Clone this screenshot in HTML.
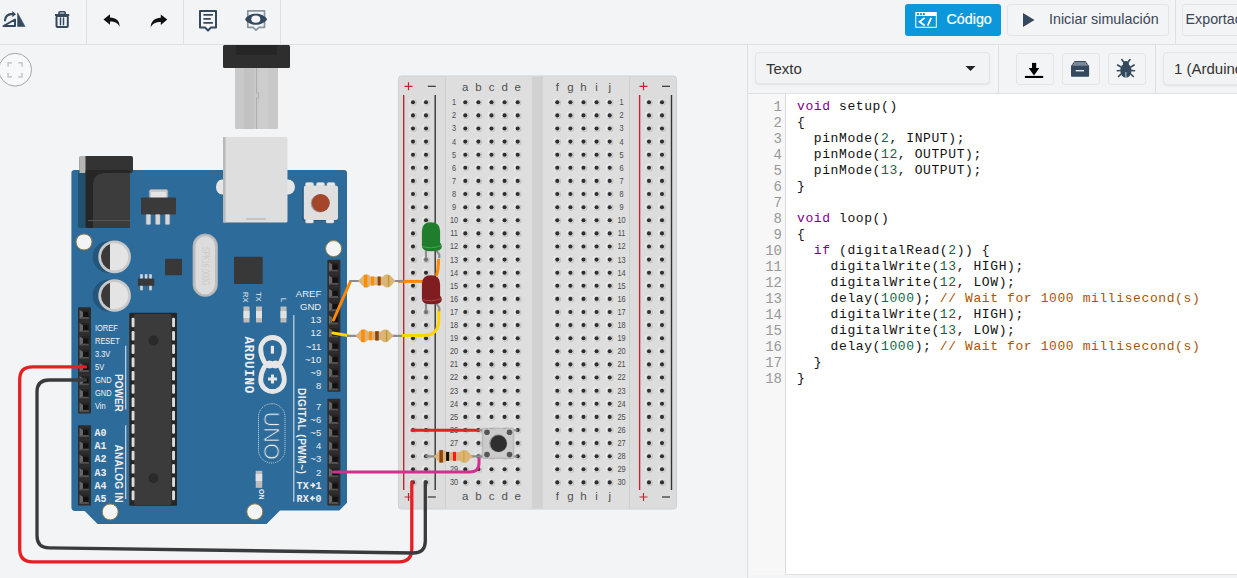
<!DOCTYPE html>
<html><head><meta charset="utf-8">
<style>
*{margin:0;padding:0;box-sizing:border-box}
html,body{width:1237px;height:578px;overflow:hidden;background:#f3f4f6;font-family:"Liberation Sans",sans-serif}
.abs{position:absolute;white-space:nowrap}
#toolbar{position:absolute;left:0;top:0;width:1237px;height:45px;border-bottom:1px solid #dce1e6;background:#f3f4f6}
.vsep{position:absolute;width:1px;background:#dce1e6}
#panel{position:absolute;left:747px;top:45px;width:490px;height:533px;border-left:1px solid #dce1e6;background:#f3f4f6}
#subbar{position:absolute;left:0;top:0;width:490px;height:49px;border-bottom:1px solid #dce1e6}
.sel{position:absolute;background:#f2f3f5;border:1px solid #e4e6e9;border-radius:4px;box-shadow:0 1px 2px rgba(0,0,0,0.08);color:#333}
.ibtn{position:absolute;border:1px solid #e2e4e7;border-radius:3px;background:#f3f4f6}
#code{position:absolute;left:1px;top:49px;width:489px;height:481px;background:#fff;border-bottom:1px solid #e0e0e0}
#gutter{position:absolute;left:0;top:0;width:37px;height:481px;background:#f7f7f7;border-right:1px solid #ddd}
.gn{height:16px;line-height:16px;font-size:14px;color:#999;text-align:right;padding-right:3px;font-family:"Liberation Mono",monospace}
#lines{position:absolute;left:48px;top:5px;white-space:pre;font-family:"Liberation Mono",monospace;font-size:13px;letter-spacing:0.6px;color:#111}
#glines{position:absolute;left:0;top:5px;width:36px}
.ln{height:16px;line-height:16px}
.k{color:#770088} .n{color:#116644} .c{color:#aa5500}
svg{position:absolute;left:0;top:0}
</style></head><body>
<svg width="747" height="578" viewBox="0 0 747 578" style="left:0;top:0">
<circle cx="15.2" cy="69.7" r="16.4" fill="#f7f8f9" stroke="#a3a7ab" stroke-width="1"/>
<path d="M8.1 66.8 V62.9 H12 M18.3 62.9 H22 V66.8 M22 73 V76.9 H18.3 M12 76.9 H8.1 V73" fill="none" stroke="#c9cbcd" stroke-width="1.7"/>
<rect x="398.5" y="76" width="278" height="433" rx="3" fill="#dcdcdc" stroke="#d0d0d0" stroke-width="1"/>
<rect x="445.5" y="76.5" width="184" height="432" fill="#dedede"/>
<rect x="532" y="76.5" width="10.7" height="432" fill="#d1d1d1"/>
<path d="M445.5 76.5 V508.5 M629.5 76.5 V508.5" stroke="#cfcfcf" stroke-width="1"/>
<path d="M403.7 95 V490 M639.6 95 V490" stroke="#c0272d" stroke-width="1.4"/>
<path d="M435.2 95 V490 M671.5 95 V490" stroke="#333" stroke-width="1.4"/>
<path d="M404.5 86.3 H412.5 M408.5 82.3 V90.3" stroke="#c0272d" stroke-width="1.2"/>
<path d="M639.5 86.3 H647.5 M643.5 82.3 V90.3" stroke="#c0272d" stroke-width="1.2"/>
<path d="M404.5 497 H412.5 M408.5 493 V501" stroke="#c0272d" stroke-width="1.2"/>
<path d="M639.5 497 H647.5 M643.5 493 V501" stroke="#c0272d" stroke-width="1.2"/>
<path d="M427.8 86.3 H435.8" stroke="#333" stroke-width="1.2"/>
<path d="M662 86.3 H670" stroke="#333" stroke-width="1.2"/>
<path d="M427.8 497 H435.8" stroke="#333" stroke-width="1.2"/>
<path d="M662 497 H670" stroke="#333" stroke-width="1.2"/>
<g fill="#f2f2f2"><circle cx="412.5" cy="102.0" r="3.3"/><circle cx="425.5" cy="102.0" r="3.3"/><circle cx="648.5" cy="102.0" r="3.3"/><circle cx="661.5" cy="102.0" r="3.3"/><circle cx="464.8" cy="102.0" r="3.3"/><circle cx="477.9" cy="102.0" r="3.3"/><circle cx="491.0" cy="102.0" r="3.3"/><circle cx="504.1" cy="102.0" r="3.3"/><circle cx="517.2" cy="102.0" r="3.3"/><circle cx="556.8" cy="102.0" r="3.3"/><circle cx="569.9" cy="102.0" r="3.3"/><circle cx="583.0" cy="102.0" r="3.3"/><circle cx="596.1" cy="102.0" r="3.3"/><circle cx="609.2" cy="102.0" r="3.3"/><circle cx="412.5" cy="115.1" r="3.3"/><circle cx="425.5" cy="115.1" r="3.3"/><circle cx="648.5" cy="115.1" r="3.3"/><circle cx="661.5" cy="115.1" r="3.3"/><circle cx="464.8" cy="115.1" r="3.3"/><circle cx="477.9" cy="115.1" r="3.3"/><circle cx="491.0" cy="115.1" r="3.3"/><circle cx="504.1" cy="115.1" r="3.3"/><circle cx="517.2" cy="115.1" r="3.3"/><circle cx="556.8" cy="115.1" r="3.3"/><circle cx="569.9" cy="115.1" r="3.3"/><circle cx="583.0" cy="115.1" r="3.3"/><circle cx="596.1" cy="115.1" r="3.3"/><circle cx="609.2" cy="115.1" r="3.3"/><circle cx="412.5" cy="128.2" r="3.3"/><circle cx="425.5" cy="128.2" r="3.3"/><circle cx="648.5" cy="128.2" r="3.3"/><circle cx="661.5" cy="128.2" r="3.3"/><circle cx="464.8" cy="128.2" r="3.3"/><circle cx="477.9" cy="128.2" r="3.3"/><circle cx="491.0" cy="128.2" r="3.3"/><circle cx="504.1" cy="128.2" r="3.3"/><circle cx="517.2" cy="128.2" r="3.3"/><circle cx="556.8" cy="128.2" r="3.3"/><circle cx="569.9" cy="128.2" r="3.3"/><circle cx="583.0" cy="128.2" r="3.3"/><circle cx="596.1" cy="128.2" r="3.3"/><circle cx="609.2" cy="128.2" r="3.3"/><circle cx="412.5" cy="141.3" r="3.3"/><circle cx="425.5" cy="141.3" r="3.3"/><circle cx="648.5" cy="141.3" r="3.3"/><circle cx="661.5" cy="141.3" r="3.3"/><circle cx="464.8" cy="141.3" r="3.3"/><circle cx="477.9" cy="141.3" r="3.3"/><circle cx="491.0" cy="141.3" r="3.3"/><circle cx="504.1" cy="141.3" r="3.3"/><circle cx="517.2" cy="141.3" r="3.3"/><circle cx="556.8" cy="141.3" r="3.3"/><circle cx="569.9" cy="141.3" r="3.3"/><circle cx="583.0" cy="141.3" r="3.3"/><circle cx="596.1" cy="141.3" r="3.3"/><circle cx="609.2" cy="141.3" r="3.3"/><circle cx="412.5" cy="154.4" r="3.3"/><circle cx="425.5" cy="154.4" r="3.3"/><circle cx="648.5" cy="154.4" r="3.3"/><circle cx="661.5" cy="154.4" r="3.3"/><circle cx="464.8" cy="154.4" r="3.3"/><circle cx="477.9" cy="154.4" r="3.3"/><circle cx="491.0" cy="154.4" r="3.3"/><circle cx="504.1" cy="154.4" r="3.3"/><circle cx="517.2" cy="154.4" r="3.3"/><circle cx="556.8" cy="154.4" r="3.3"/><circle cx="569.9" cy="154.4" r="3.3"/><circle cx="583.0" cy="154.4" r="3.3"/><circle cx="596.1" cy="154.4" r="3.3"/><circle cx="609.2" cy="154.4" r="3.3"/><circle cx="412.5" cy="167.5" r="3.3"/><circle cx="425.5" cy="167.5" r="3.3"/><circle cx="648.5" cy="167.5" r="3.3"/><circle cx="661.5" cy="167.5" r="3.3"/><circle cx="464.8" cy="167.5" r="3.3"/><circle cx="477.9" cy="167.5" r="3.3"/><circle cx="491.0" cy="167.5" r="3.3"/><circle cx="504.1" cy="167.5" r="3.3"/><circle cx="517.2" cy="167.5" r="3.3"/><circle cx="556.8" cy="167.5" r="3.3"/><circle cx="569.9" cy="167.5" r="3.3"/><circle cx="583.0" cy="167.5" r="3.3"/><circle cx="596.1" cy="167.5" r="3.3"/><circle cx="609.2" cy="167.5" r="3.3"/><circle cx="412.5" cy="180.6" r="3.3"/><circle cx="425.5" cy="180.6" r="3.3"/><circle cx="648.5" cy="180.6" r="3.3"/><circle cx="661.5" cy="180.6" r="3.3"/><circle cx="464.8" cy="180.6" r="3.3"/><circle cx="477.9" cy="180.6" r="3.3"/><circle cx="491.0" cy="180.6" r="3.3"/><circle cx="504.1" cy="180.6" r="3.3"/><circle cx="517.2" cy="180.6" r="3.3"/><circle cx="556.8" cy="180.6" r="3.3"/><circle cx="569.9" cy="180.6" r="3.3"/><circle cx="583.0" cy="180.6" r="3.3"/><circle cx="596.1" cy="180.6" r="3.3"/><circle cx="609.2" cy="180.6" r="3.3"/><circle cx="412.5" cy="193.7" r="3.3"/><circle cx="425.5" cy="193.7" r="3.3"/><circle cx="648.5" cy="193.7" r="3.3"/><circle cx="661.5" cy="193.7" r="3.3"/><circle cx="464.8" cy="193.7" r="3.3"/><circle cx="477.9" cy="193.7" r="3.3"/><circle cx="491.0" cy="193.7" r="3.3"/><circle cx="504.1" cy="193.7" r="3.3"/><circle cx="517.2" cy="193.7" r="3.3"/><circle cx="556.8" cy="193.7" r="3.3"/><circle cx="569.9" cy="193.7" r="3.3"/><circle cx="583.0" cy="193.7" r="3.3"/><circle cx="596.1" cy="193.7" r="3.3"/><circle cx="609.2" cy="193.7" r="3.3"/><circle cx="412.5" cy="206.9" r="3.3"/><circle cx="425.5" cy="206.9" r="3.3"/><circle cx="648.5" cy="206.9" r="3.3"/><circle cx="661.5" cy="206.9" r="3.3"/><circle cx="464.8" cy="206.9" r="3.3"/><circle cx="477.9" cy="206.9" r="3.3"/><circle cx="491.0" cy="206.9" r="3.3"/><circle cx="504.1" cy="206.9" r="3.3"/><circle cx="517.2" cy="206.9" r="3.3"/><circle cx="556.8" cy="206.9" r="3.3"/><circle cx="569.9" cy="206.9" r="3.3"/><circle cx="583.0" cy="206.9" r="3.3"/><circle cx="596.1" cy="206.9" r="3.3"/><circle cx="609.2" cy="206.9" r="3.3"/><circle cx="412.5" cy="220.0" r="3.3"/><circle cx="425.5" cy="220.0" r="3.3"/><circle cx="648.5" cy="220.0" r="3.3"/><circle cx="661.5" cy="220.0" r="3.3"/><circle cx="464.8" cy="220.0" r="3.3"/><circle cx="477.9" cy="220.0" r="3.3"/><circle cx="491.0" cy="220.0" r="3.3"/><circle cx="504.1" cy="220.0" r="3.3"/><circle cx="517.2" cy="220.0" r="3.3"/><circle cx="556.8" cy="220.0" r="3.3"/><circle cx="569.9" cy="220.0" r="3.3"/><circle cx="583.0" cy="220.0" r="3.3"/><circle cx="596.1" cy="220.0" r="3.3"/><circle cx="609.2" cy="220.0" r="3.3"/><circle cx="412.5" cy="233.1" r="3.3"/><circle cx="425.5" cy="233.1" r="3.3"/><circle cx="648.5" cy="233.1" r="3.3"/><circle cx="661.5" cy="233.1" r="3.3"/><circle cx="464.8" cy="233.1" r="3.3"/><circle cx="477.9" cy="233.1" r="3.3"/><circle cx="491.0" cy="233.1" r="3.3"/><circle cx="504.1" cy="233.1" r="3.3"/><circle cx="517.2" cy="233.1" r="3.3"/><circle cx="556.8" cy="233.1" r="3.3"/><circle cx="569.9" cy="233.1" r="3.3"/><circle cx="583.0" cy="233.1" r="3.3"/><circle cx="596.1" cy="233.1" r="3.3"/><circle cx="609.2" cy="233.1" r="3.3"/><circle cx="412.5" cy="246.2" r="3.3"/><circle cx="425.5" cy="246.2" r="3.3"/><circle cx="648.5" cy="246.2" r="3.3"/><circle cx="661.5" cy="246.2" r="3.3"/><circle cx="464.8" cy="246.2" r="3.3"/><circle cx="477.9" cy="246.2" r="3.3"/><circle cx="491.0" cy="246.2" r="3.3"/><circle cx="504.1" cy="246.2" r="3.3"/><circle cx="517.2" cy="246.2" r="3.3"/><circle cx="556.8" cy="246.2" r="3.3"/><circle cx="569.9" cy="246.2" r="3.3"/><circle cx="583.0" cy="246.2" r="3.3"/><circle cx="596.1" cy="246.2" r="3.3"/><circle cx="609.2" cy="246.2" r="3.3"/><circle cx="412.5" cy="259.3" r="3.3"/><circle cx="425.5" cy="259.3" r="3.3"/><circle cx="648.5" cy="259.3" r="3.3"/><circle cx="661.5" cy="259.3" r="3.3"/><circle cx="464.8" cy="259.3" r="3.3"/><circle cx="477.9" cy="259.3" r="3.3"/><circle cx="491.0" cy="259.3" r="3.3"/><circle cx="504.1" cy="259.3" r="3.3"/><circle cx="517.2" cy="259.3" r="3.3"/><circle cx="556.8" cy="259.3" r="3.3"/><circle cx="569.9" cy="259.3" r="3.3"/><circle cx="583.0" cy="259.3" r="3.3"/><circle cx="596.1" cy="259.3" r="3.3"/><circle cx="609.2" cy="259.3" r="3.3"/><circle cx="412.5" cy="272.4" r="3.3"/><circle cx="425.5" cy="272.4" r="3.3"/><circle cx="648.5" cy="272.4" r="3.3"/><circle cx="661.5" cy="272.4" r="3.3"/><circle cx="464.8" cy="272.4" r="3.3"/><circle cx="477.9" cy="272.4" r="3.3"/><circle cx="491.0" cy="272.4" r="3.3"/><circle cx="504.1" cy="272.4" r="3.3"/><circle cx="517.2" cy="272.4" r="3.3"/><circle cx="556.8" cy="272.4" r="3.3"/><circle cx="569.9" cy="272.4" r="3.3"/><circle cx="583.0" cy="272.4" r="3.3"/><circle cx="596.1" cy="272.4" r="3.3"/><circle cx="609.2" cy="272.4" r="3.3"/><circle cx="412.5" cy="285.5" r="3.3"/><circle cx="425.5" cy="285.5" r="3.3"/><circle cx="648.5" cy="285.5" r="3.3"/><circle cx="661.5" cy="285.5" r="3.3"/><circle cx="464.8" cy="285.5" r="3.3"/><circle cx="477.9" cy="285.5" r="3.3"/><circle cx="491.0" cy="285.5" r="3.3"/><circle cx="504.1" cy="285.5" r="3.3"/><circle cx="517.2" cy="285.5" r="3.3"/><circle cx="556.8" cy="285.5" r="3.3"/><circle cx="569.9" cy="285.5" r="3.3"/><circle cx="583.0" cy="285.5" r="3.3"/><circle cx="596.1" cy="285.5" r="3.3"/><circle cx="609.2" cy="285.5" r="3.3"/><circle cx="412.5" cy="298.6" r="3.3"/><circle cx="425.5" cy="298.6" r="3.3"/><circle cx="648.5" cy="298.6" r="3.3"/><circle cx="661.5" cy="298.6" r="3.3"/><circle cx="464.8" cy="298.6" r="3.3"/><circle cx="477.9" cy="298.6" r="3.3"/><circle cx="491.0" cy="298.6" r="3.3"/><circle cx="504.1" cy="298.6" r="3.3"/><circle cx="517.2" cy="298.6" r="3.3"/><circle cx="556.8" cy="298.6" r="3.3"/><circle cx="569.9" cy="298.6" r="3.3"/><circle cx="583.0" cy="298.6" r="3.3"/><circle cx="596.1" cy="298.6" r="3.3"/><circle cx="609.2" cy="298.6" r="3.3"/><circle cx="412.5" cy="311.7" r="3.3"/><circle cx="425.5" cy="311.7" r="3.3"/><circle cx="648.5" cy="311.7" r="3.3"/><circle cx="661.5" cy="311.7" r="3.3"/><circle cx="464.8" cy="311.7" r="3.3"/><circle cx="477.9" cy="311.7" r="3.3"/><circle cx="491.0" cy="311.7" r="3.3"/><circle cx="504.1" cy="311.7" r="3.3"/><circle cx="517.2" cy="311.7" r="3.3"/><circle cx="556.8" cy="311.7" r="3.3"/><circle cx="569.9" cy="311.7" r="3.3"/><circle cx="583.0" cy="311.7" r="3.3"/><circle cx="596.1" cy="311.7" r="3.3"/><circle cx="609.2" cy="311.7" r="3.3"/><circle cx="412.5" cy="324.8" r="3.3"/><circle cx="425.5" cy="324.8" r="3.3"/><circle cx="648.5" cy="324.8" r="3.3"/><circle cx="661.5" cy="324.8" r="3.3"/><circle cx="464.8" cy="324.8" r="3.3"/><circle cx="477.9" cy="324.8" r="3.3"/><circle cx="491.0" cy="324.8" r="3.3"/><circle cx="504.1" cy="324.8" r="3.3"/><circle cx="517.2" cy="324.8" r="3.3"/><circle cx="556.8" cy="324.8" r="3.3"/><circle cx="569.9" cy="324.8" r="3.3"/><circle cx="583.0" cy="324.8" r="3.3"/><circle cx="596.1" cy="324.8" r="3.3"/><circle cx="609.2" cy="324.8" r="3.3"/><circle cx="412.5" cy="337.9" r="3.3"/><circle cx="425.5" cy="337.9" r="3.3"/><circle cx="648.5" cy="337.9" r="3.3"/><circle cx="661.5" cy="337.9" r="3.3"/><circle cx="464.8" cy="337.9" r="3.3"/><circle cx="477.9" cy="337.9" r="3.3"/><circle cx="491.0" cy="337.9" r="3.3"/><circle cx="504.1" cy="337.9" r="3.3"/><circle cx="517.2" cy="337.9" r="3.3"/><circle cx="556.8" cy="337.9" r="3.3"/><circle cx="569.9" cy="337.9" r="3.3"/><circle cx="583.0" cy="337.9" r="3.3"/><circle cx="596.1" cy="337.9" r="3.3"/><circle cx="609.2" cy="337.9" r="3.3"/><circle cx="412.5" cy="351.0" r="3.3"/><circle cx="425.5" cy="351.0" r="3.3"/><circle cx="648.5" cy="351.0" r="3.3"/><circle cx="661.5" cy="351.0" r="3.3"/><circle cx="464.8" cy="351.0" r="3.3"/><circle cx="477.9" cy="351.0" r="3.3"/><circle cx="491.0" cy="351.0" r="3.3"/><circle cx="504.1" cy="351.0" r="3.3"/><circle cx="517.2" cy="351.0" r="3.3"/><circle cx="556.8" cy="351.0" r="3.3"/><circle cx="569.9" cy="351.0" r="3.3"/><circle cx="583.0" cy="351.0" r="3.3"/><circle cx="596.1" cy="351.0" r="3.3"/><circle cx="609.2" cy="351.0" r="3.3"/><circle cx="412.5" cy="364.1" r="3.3"/><circle cx="425.5" cy="364.1" r="3.3"/><circle cx="648.5" cy="364.1" r="3.3"/><circle cx="661.5" cy="364.1" r="3.3"/><circle cx="464.8" cy="364.1" r="3.3"/><circle cx="477.9" cy="364.1" r="3.3"/><circle cx="491.0" cy="364.1" r="3.3"/><circle cx="504.1" cy="364.1" r="3.3"/><circle cx="517.2" cy="364.1" r="3.3"/><circle cx="556.8" cy="364.1" r="3.3"/><circle cx="569.9" cy="364.1" r="3.3"/><circle cx="583.0" cy="364.1" r="3.3"/><circle cx="596.1" cy="364.1" r="3.3"/><circle cx="609.2" cy="364.1" r="3.3"/><circle cx="412.5" cy="377.2" r="3.3"/><circle cx="425.5" cy="377.2" r="3.3"/><circle cx="648.5" cy="377.2" r="3.3"/><circle cx="661.5" cy="377.2" r="3.3"/><circle cx="464.8" cy="377.2" r="3.3"/><circle cx="477.9" cy="377.2" r="3.3"/><circle cx="491.0" cy="377.2" r="3.3"/><circle cx="504.1" cy="377.2" r="3.3"/><circle cx="517.2" cy="377.2" r="3.3"/><circle cx="556.8" cy="377.2" r="3.3"/><circle cx="569.9" cy="377.2" r="3.3"/><circle cx="583.0" cy="377.2" r="3.3"/><circle cx="596.1" cy="377.2" r="3.3"/><circle cx="609.2" cy="377.2" r="3.3"/><circle cx="412.5" cy="390.4" r="3.3"/><circle cx="425.5" cy="390.4" r="3.3"/><circle cx="648.5" cy="390.4" r="3.3"/><circle cx="661.5" cy="390.4" r="3.3"/><circle cx="464.8" cy="390.4" r="3.3"/><circle cx="477.9" cy="390.4" r="3.3"/><circle cx="491.0" cy="390.4" r="3.3"/><circle cx="504.1" cy="390.4" r="3.3"/><circle cx="517.2" cy="390.4" r="3.3"/><circle cx="556.8" cy="390.4" r="3.3"/><circle cx="569.9" cy="390.4" r="3.3"/><circle cx="583.0" cy="390.4" r="3.3"/><circle cx="596.1" cy="390.4" r="3.3"/><circle cx="609.2" cy="390.4" r="3.3"/><circle cx="412.5" cy="403.5" r="3.3"/><circle cx="425.5" cy="403.5" r="3.3"/><circle cx="648.5" cy="403.5" r="3.3"/><circle cx="661.5" cy="403.5" r="3.3"/><circle cx="464.8" cy="403.5" r="3.3"/><circle cx="477.9" cy="403.5" r="3.3"/><circle cx="491.0" cy="403.5" r="3.3"/><circle cx="504.1" cy="403.5" r="3.3"/><circle cx="517.2" cy="403.5" r="3.3"/><circle cx="556.8" cy="403.5" r="3.3"/><circle cx="569.9" cy="403.5" r="3.3"/><circle cx="583.0" cy="403.5" r="3.3"/><circle cx="596.1" cy="403.5" r="3.3"/><circle cx="609.2" cy="403.5" r="3.3"/><circle cx="412.5" cy="416.6" r="3.3"/><circle cx="425.5" cy="416.6" r="3.3"/><circle cx="648.5" cy="416.6" r="3.3"/><circle cx="661.5" cy="416.6" r="3.3"/><circle cx="464.8" cy="416.6" r="3.3"/><circle cx="477.9" cy="416.6" r="3.3"/><circle cx="491.0" cy="416.6" r="3.3"/><circle cx="504.1" cy="416.6" r="3.3"/><circle cx="517.2" cy="416.6" r="3.3"/><circle cx="556.8" cy="416.6" r="3.3"/><circle cx="569.9" cy="416.6" r="3.3"/><circle cx="583.0" cy="416.6" r="3.3"/><circle cx="596.1" cy="416.6" r="3.3"/><circle cx="609.2" cy="416.6" r="3.3"/><circle cx="412.5" cy="429.7" r="3.3"/><circle cx="425.5" cy="429.7" r="3.3"/><circle cx="648.5" cy="429.7" r="3.3"/><circle cx="661.5" cy="429.7" r="3.3"/><circle cx="464.8" cy="429.7" r="3.3"/><circle cx="477.9" cy="429.7" r="3.3"/><circle cx="491.0" cy="429.7" r="3.3"/><circle cx="504.1" cy="429.7" r="3.3"/><circle cx="517.2" cy="429.7" r="3.3"/><circle cx="556.8" cy="429.7" r="3.3"/><circle cx="569.9" cy="429.7" r="3.3"/><circle cx="583.0" cy="429.7" r="3.3"/><circle cx="596.1" cy="429.7" r="3.3"/><circle cx="609.2" cy="429.7" r="3.3"/><circle cx="412.5" cy="442.8" r="3.3"/><circle cx="425.5" cy="442.8" r="3.3"/><circle cx="648.5" cy="442.8" r="3.3"/><circle cx="661.5" cy="442.8" r="3.3"/><circle cx="464.8" cy="442.8" r="3.3"/><circle cx="477.9" cy="442.8" r="3.3"/><circle cx="491.0" cy="442.8" r="3.3"/><circle cx="504.1" cy="442.8" r="3.3"/><circle cx="517.2" cy="442.8" r="3.3"/><circle cx="556.8" cy="442.8" r="3.3"/><circle cx="569.9" cy="442.8" r="3.3"/><circle cx="583.0" cy="442.8" r="3.3"/><circle cx="596.1" cy="442.8" r="3.3"/><circle cx="609.2" cy="442.8" r="3.3"/><circle cx="412.5" cy="455.9" r="3.3"/><circle cx="425.5" cy="455.9" r="3.3"/><circle cx="648.5" cy="455.9" r="3.3"/><circle cx="661.5" cy="455.9" r="3.3"/><circle cx="464.8" cy="455.9" r="3.3"/><circle cx="477.9" cy="455.9" r="3.3"/><circle cx="491.0" cy="455.9" r="3.3"/><circle cx="504.1" cy="455.9" r="3.3"/><circle cx="517.2" cy="455.9" r="3.3"/><circle cx="556.8" cy="455.9" r="3.3"/><circle cx="569.9" cy="455.9" r="3.3"/><circle cx="583.0" cy="455.9" r="3.3"/><circle cx="596.1" cy="455.9" r="3.3"/><circle cx="609.2" cy="455.9" r="3.3"/><circle cx="412.5" cy="469.0" r="3.3"/><circle cx="425.5" cy="469.0" r="3.3"/><circle cx="648.5" cy="469.0" r="3.3"/><circle cx="661.5" cy="469.0" r="3.3"/><circle cx="464.8" cy="469.0" r="3.3"/><circle cx="477.9" cy="469.0" r="3.3"/><circle cx="491.0" cy="469.0" r="3.3"/><circle cx="504.1" cy="469.0" r="3.3"/><circle cx="517.2" cy="469.0" r="3.3"/><circle cx="556.8" cy="469.0" r="3.3"/><circle cx="569.9" cy="469.0" r="3.3"/><circle cx="583.0" cy="469.0" r="3.3"/><circle cx="596.1" cy="469.0" r="3.3"/><circle cx="609.2" cy="469.0" r="3.3"/><circle cx="412.5" cy="482.1" r="3.3"/><circle cx="425.5" cy="482.1" r="3.3"/><circle cx="648.5" cy="482.1" r="3.3"/><circle cx="661.5" cy="482.1" r="3.3"/><circle cx="464.8" cy="482.1" r="3.3"/><circle cx="477.9" cy="482.1" r="3.3"/><circle cx="491.0" cy="482.1" r="3.3"/><circle cx="504.1" cy="482.1" r="3.3"/><circle cx="517.2" cy="482.1" r="3.3"/><circle cx="556.8" cy="482.1" r="3.3"/><circle cx="569.9" cy="482.1" r="3.3"/><circle cx="583.0" cy="482.1" r="3.3"/><circle cx="596.1" cy="482.1" r="3.3"/><circle cx="609.2" cy="482.1" r="3.3"/></g>
<g fill="#bdbdbd"><circle cx="413.5" cy="102.6" r="3.2"/><circle cx="426.5" cy="102.6" r="3.2"/><circle cx="649.5" cy="102.6" r="3.2"/><circle cx="662.5" cy="102.6" r="3.2"/><circle cx="465.8" cy="102.6" r="3.2"/><circle cx="478.9" cy="102.6" r="3.2"/><circle cx="492.0" cy="102.6" r="3.2"/><circle cx="505.1" cy="102.6" r="3.2"/><circle cx="518.2" cy="102.6" r="3.2"/><circle cx="557.8" cy="102.6" r="3.2"/><circle cx="570.9" cy="102.6" r="3.2"/><circle cx="584.0" cy="102.6" r="3.2"/><circle cx="597.1" cy="102.6" r="3.2"/><circle cx="610.2" cy="102.6" r="3.2"/><circle cx="413.5" cy="115.7" r="3.2"/><circle cx="426.5" cy="115.7" r="3.2"/><circle cx="649.5" cy="115.7" r="3.2"/><circle cx="662.5" cy="115.7" r="3.2"/><circle cx="465.8" cy="115.7" r="3.2"/><circle cx="478.9" cy="115.7" r="3.2"/><circle cx="492.0" cy="115.7" r="3.2"/><circle cx="505.1" cy="115.7" r="3.2"/><circle cx="518.2" cy="115.7" r="3.2"/><circle cx="557.8" cy="115.7" r="3.2"/><circle cx="570.9" cy="115.7" r="3.2"/><circle cx="584.0" cy="115.7" r="3.2"/><circle cx="597.1" cy="115.7" r="3.2"/><circle cx="610.2" cy="115.7" r="3.2"/><circle cx="413.5" cy="128.8" r="3.2"/><circle cx="426.5" cy="128.8" r="3.2"/><circle cx="649.5" cy="128.8" r="3.2"/><circle cx="662.5" cy="128.8" r="3.2"/><circle cx="465.8" cy="128.8" r="3.2"/><circle cx="478.9" cy="128.8" r="3.2"/><circle cx="492.0" cy="128.8" r="3.2"/><circle cx="505.1" cy="128.8" r="3.2"/><circle cx="518.2" cy="128.8" r="3.2"/><circle cx="557.8" cy="128.8" r="3.2"/><circle cx="570.9" cy="128.8" r="3.2"/><circle cx="584.0" cy="128.8" r="3.2"/><circle cx="597.1" cy="128.8" r="3.2"/><circle cx="610.2" cy="128.8" r="3.2"/><circle cx="413.5" cy="141.9" r="3.2"/><circle cx="426.5" cy="141.9" r="3.2"/><circle cx="649.5" cy="141.9" r="3.2"/><circle cx="662.5" cy="141.9" r="3.2"/><circle cx="465.8" cy="141.9" r="3.2"/><circle cx="478.9" cy="141.9" r="3.2"/><circle cx="492.0" cy="141.9" r="3.2"/><circle cx="505.1" cy="141.9" r="3.2"/><circle cx="518.2" cy="141.9" r="3.2"/><circle cx="557.8" cy="141.9" r="3.2"/><circle cx="570.9" cy="141.9" r="3.2"/><circle cx="584.0" cy="141.9" r="3.2"/><circle cx="597.1" cy="141.9" r="3.2"/><circle cx="610.2" cy="141.9" r="3.2"/><circle cx="413.5" cy="155.0" r="3.2"/><circle cx="426.5" cy="155.0" r="3.2"/><circle cx="649.5" cy="155.0" r="3.2"/><circle cx="662.5" cy="155.0" r="3.2"/><circle cx="465.8" cy="155.0" r="3.2"/><circle cx="478.9" cy="155.0" r="3.2"/><circle cx="492.0" cy="155.0" r="3.2"/><circle cx="505.1" cy="155.0" r="3.2"/><circle cx="518.2" cy="155.0" r="3.2"/><circle cx="557.8" cy="155.0" r="3.2"/><circle cx="570.9" cy="155.0" r="3.2"/><circle cx="584.0" cy="155.0" r="3.2"/><circle cx="597.1" cy="155.0" r="3.2"/><circle cx="610.2" cy="155.0" r="3.2"/><circle cx="413.5" cy="168.1" r="3.2"/><circle cx="426.5" cy="168.1" r="3.2"/><circle cx="649.5" cy="168.1" r="3.2"/><circle cx="662.5" cy="168.1" r="3.2"/><circle cx="465.8" cy="168.1" r="3.2"/><circle cx="478.9" cy="168.1" r="3.2"/><circle cx="492.0" cy="168.1" r="3.2"/><circle cx="505.1" cy="168.1" r="3.2"/><circle cx="518.2" cy="168.1" r="3.2"/><circle cx="557.8" cy="168.1" r="3.2"/><circle cx="570.9" cy="168.1" r="3.2"/><circle cx="584.0" cy="168.1" r="3.2"/><circle cx="597.1" cy="168.1" r="3.2"/><circle cx="610.2" cy="168.1" r="3.2"/><circle cx="413.5" cy="181.2" r="3.2"/><circle cx="426.5" cy="181.2" r="3.2"/><circle cx="649.5" cy="181.2" r="3.2"/><circle cx="662.5" cy="181.2" r="3.2"/><circle cx="465.8" cy="181.2" r="3.2"/><circle cx="478.9" cy="181.2" r="3.2"/><circle cx="492.0" cy="181.2" r="3.2"/><circle cx="505.1" cy="181.2" r="3.2"/><circle cx="518.2" cy="181.2" r="3.2"/><circle cx="557.8" cy="181.2" r="3.2"/><circle cx="570.9" cy="181.2" r="3.2"/><circle cx="584.0" cy="181.2" r="3.2"/><circle cx="597.1" cy="181.2" r="3.2"/><circle cx="610.2" cy="181.2" r="3.2"/><circle cx="413.5" cy="194.3" r="3.2"/><circle cx="426.5" cy="194.3" r="3.2"/><circle cx="649.5" cy="194.3" r="3.2"/><circle cx="662.5" cy="194.3" r="3.2"/><circle cx="465.8" cy="194.3" r="3.2"/><circle cx="478.9" cy="194.3" r="3.2"/><circle cx="492.0" cy="194.3" r="3.2"/><circle cx="505.1" cy="194.3" r="3.2"/><circle cx="518.2" cy="194.3" r="3.2"/><circle cx="557.8" cy="194.3" r="3.2"/><circle cx="570.9" cy="194.3" r="3.2"/><circle cx="584.0" cy="194.3" r="3.2"/><circle cx="597.1" cy="194.3" r="3.2"/><circle cx="610.2" cy="194.3" r="3.2"/><circle cx="413.5" cy="207.5" r="3.2"/><circle cx="426.5" cy="207.5" r="3.2"/><circle cx="649.5" cy="207.5" r="3.2"/><circle cx="662.5" cy="207.5" r="3.2"/><circle cx="465.8" cy="207.5" r="3.2"/><circle cx="478.9" cy="207.5" r="3.2"/><circle cx="492.0" cy="207.5" r="3.2"/><circle cx="505.1" cy="207.5" r="3.2"/><circle cx="518.2" cy="207.5" r="3.2"/><circle cx="557.8" cy="207.5" r="3.2"/><circle cx="570.9" cy="207.5" r="3.2"/><circle cx="584.0" cy="207.5" r="3.2"/><circle cx="597.1" cy="207.5" r="3.2"/><circle cx="610.2" cy="207.5" r="3.2"/><circle cx="413.5" cy="220.6" r="3.2"/><circle cx="426.5" cy="220.6" r="3.2"/><circle cx="649.5" cy="220.6" r="3.2"/><circle cx="662.5" cy="220.6" r="3.2"/><circle cx="465.8" cy="220.6" r="3.2"/><circle cx="478.9" cy="220.6" r="3.2"/><circle cx="492.0" cy="220.6" r="3.2"/><circle cx="505.1" cy="220.6" r="3.2"/><circle cx="518.2" cy="220.6" r="3.2"/><circle cx="557.8" cy="220.6" r="3.2"/><circle cx="570.9" cy="220.6" r="3.2"/><circle cx="584.0" cy="220.6" r="3.2"/><circle cx="597.1" cy="220.6" r="3.2"/><circle cx="610.2" cy="220.6" r="3.2"/><circle cx="413.5" cy="233.7" r="3.2"/><circle cx="426.5" cy="233.7" r="3.2"/><circle cx="649.5" cy="233.7" r="3.2"/><circle cx="662.5" cy="233.7" r="3.2"/><circle cx="465.8" cy="233.7" r="3.2"/><circle cx="478.9" cy="233.7" r="3.2"/><circle cx="492.0" cy="233.7" r="3.2"/><circle cx="505.1" cy="233.7" r="3.2"/><circle cx="518.2" cy="233.7" r="3.2"/><circle cx="557.8" cy="233.7" r="3.2"/><circle cx="570.9" cy="233.7" r="3.2"/><circle cx="584.0" cy="233.7" r="3.2"/><circle cx="597.1" cy="233.7" r="3.2"/><circle cx="610.2" cy="233.7" r="3.2"/><circle cx="413.5" cy="246.8" r="3.2"/><circle cx="426.5" cy="246.8" r="3.2"/><circle cx="649.5" cy="246.8" r="3.2"/><circle cx="662.5" cy="246.8" r="3.2"/><circle cx="465.8" cy="246.8" r="3.2"/><circle cx="478.9" cy="246.8" r="3.2"/><circle cx="492.0" cy="246.8" r="3.2"/><circle cx="505.1" cy="246.8" r="3.2"/><circle cx="518.2" cy="246.8" r="3.2"/><circle cx="557.8" cy="246.8" r="3.2"/><circle cx="570.9" cy="246.8" r="3.2"/><circle cx="584.0" cy="246.8" r="3.2"/><circle cx="597.1" cy="246.8" r="3.2"/><circle cx="610.2" cy="246.8" r="3.2"/><circle cx="413.5" cy="259.9" r="3.2"/><circle cx="426.5" cy="259.9" r="3.2"/><circle cx="649.5" cy="259.9" r="3.2"/><circle cx="662.5" cy="259.9" r="3.2"/><circle cx="465.8" cy="259.9" r="3.2"/><circle cx="478.9" cy="259.9" r="3.2"/><circle cx="492.0" cy="259.9" r="3.2"/><circle cx="505.1" cy="259.9" r="3.2"/><circle cx="518.2" cy="259.9" r="3.2"/><circle cx="557.8" cy="259.9" r="3.2"/><circle cx="570.9" cy="259.9" r="3.2"/><circle cx="584.0" cy="259.9" r="3.2"/><circle cx="597.1" cy="259.9" r="3.2"/><circle cx="610.2" cy="259.9" r="3.2"/><circle cx="413.5" cy="273.0" r="3.2"/><circle cx="426.5" cy="273.0" r="3.2"/><circle cx="649.5" cy="273.0" r="3.2"/><circle cx="662.5" cy="273.0" r="3.2"/><circle cx="465.8" cy="273.0" r="3.2"/><circle cx="478.9" cy="273.0" r="3.2"/><circle cx="492.0" cy="273.0" r="3.2"/><circle cx="505.1" cy="273.0" r="3.2"/><circle cx="518.2" cy="273.0" r="3.2"/><circle cx="557.8" cy="273.0" r="3.2"/><circle cx="570.9" cy="273.0" r="3.2"/><circle cx="584.0" cy="273.0" r="3.2"/><circle cx="597.1" cy="273.0" r="3.2"/><circle cx="610.2" cy="273.0" r="3.2"/><circle cx="413.5" cy="286.1" r="3.2"/><circle cx="426.5" cy="286.1" r="3.2"/><circle cx="649.5" cy="286.1" r="3.2"/><circle cx="662.5" cy="286.1" r="3.2"/><circle cx="465.8" cy="286.1" r="3.2"/><circle cx="478.9" cy="286.1" r="3.2"/><circle cx="492.0" cy="286.1" r="3.2"/><circle cx="505.1" cy="286.1" r="3.2"/><circle cx="518.2" cy="286.1" r="3.2"/><circle cx="557.8" cy="286.1" r="3.2"/><circle cx="570.9" cy="286.1" r="3.2"/><circle cx="584.0" cy="286.1" r="3.2"/><circle cx="597.1" cy="286.1" r="3.2"/><circle cx="610.2" cy="286.1" r="3.2"/><circle cx="413.5" cy="299.2" r="3.2"/><circle cx="426.5" cy="299.2" r="3.2"/><circle cx="649.5" cy="299.2" r="3.2"/><circle cx="662.5" cy="299.2" r="3.2"/><circle cx="465.8" cy="299.2" r="3.2"/><circle cx="478.9" cy="299.2" r="3.2"/><circle cx="492.0" cy="299.2" r="3.2"/><circle cx="505.1" cy="299.2" r="3.2"/><circle cx="518.2" cy="299.2" r="3.2"/><circle cx="557.8" cy="299.2" r="3.2"/><circle cx="570.9" cy="299.2" r="3.2"/><circle cx="584.0" cy="299.2" r="3.2"/><circle cx="597.1" cy="299.2" r="3.2"/><circle cx="610.2" cy="299.2" r="3.2"/><circle cx="413.5" cy="312.3" r="3.2"/><circle cx="426.5" cy="312.3" r="3.2"/><circle cx="649.5" cy="312.3" r="3.2"/><circle cx="662.5" cy="312.3" r="3.2"/><circle cx="465.8" cy="312.3" r="3.2"/><circle cx="478.9" cy="312.3" r="3.2"/><circle cx="492.0" cy="312.3" r="3.2"/><circle cx="505.1" cy="312.3" r="3.2"/><circle cx="518.2" cy="312.3" r="3.2"/><circle cx="557.8" cy="312.3" r="3.2"/><circle cx="570.9" cy="312.3" r="3.2"/><circle cx="584.0" cy="312.3" r="3.2"/><circle cx="597.1" cy="312.3" r="3.2"/><circle cx="610.2" cy="312.3" r="3.2"/><circle cx="413.5" cy="325.4" r="3.2"/><circle cx="426.5" cy="325.4" r="3.2"/><circle cx="649.5" cy="325.4" r="3.2"/><circle cx="662.5" cy="325.4" r="3.2"/><circle cx="465.8" cy="325.4" r="3.2"/><circle cx="478.9" cy="325.4" r="3.2"/><circle cx="492.0" cy="325.4" r="3.2"/><circle cx="505.1" cy="325.4" r="3.2"/><circle cx="518.2" cy="325.4" r="3.2"/><circle cx="557.8" cy="325.4" r="3.2"/><circle cx="570.9" cy="325.4" r="3.2"/><circle cx="584.0" cy="325.4" r="3.2"/><circle cx="597.1" cy="325.4" r="3.2"/><circle cx="610.2" cy="325.4" r="3.2"/><circle cx="413.5" cy="338.5" r="3.2"/><circle cx="426.5" cy="338.5" r="3.2"/><circle cx="649.5" cy="338.5" r="3.2"/><circle cx="662.5" cy="338.5" r="3.2"/><circle cx="465.8" cy="338.5" r="3.2"/><circle cx="478.9" cy="338.5" r="3.2"/><circle cx="492.0" cy="338.5" r="3.2"/><circle cx="505.1" cy="338.5" r="3.2"/><circle cx="518.2" cy="338.5" r="3.2"/><circle cx="557.8" cy="338.5" r="3.2"/><circle cx="570.9" cy="338.5" r="3.2"/><circle cx="584.0" cy="338.5" r="3.2"/><circle cx="597.1" cy="338.5" r="3.2"/><circle cx="610.2" cy="338.5" r="3.2"/><circle cx="413.5" cy="351.6" r="3.2"/><circle cx="426.5" cy="351.6" r="3.2"/><circle cx="649.5" cy="351.6" r="3.2"/><circle cx="662.5" cy="351.6" r="3.2"/><circle cx="465.8" cy="351.6" r="3.2"/><circle cx="478.9" cy="351.6" r="3.2"/><circle cx="492.0" cy="351.6" r="3.2"/><circle cx="505.1" cy="351.6" r="3.2"/><circle cx="518.2" cy="351.6" r="3.2"/><circle cx="557.8" cy="351.6" r="3.2"/><circle cx="570.9" cy="351.6" r="3.2"/><circle cx="584.0" cy="351.6" r="3.2"/><circle cx="597.1" cy="351.6" r="3.2"/><circle cx="610.2" cy="351.6" r="3.2"/><circle cx="413.5" cy="364.7" r="3.2"/><circle cx="426.5" cy="364.7" r="3.2"/><circle cx="649.5" cy="364.7" r="3.2"/><circle cx="662.5" cy="364.7" r="3.2"/><circle cx="465.8" cy="364.7" r="3.2"/><circle cx="478.9" cy="364.7" r="3.2"/><circle cx="492.0" cy="364.7" r="3.2"/><circle cx="505.1" cy="364.7" r="3.2"/><circle cx="518.2" cy="364.7" r="3.2"/><circle cx="557.8" cy="364.7" r="3.2"/><circle cx="570.9" cy="364.7" r="3.2"/><circle cx="584.0" cy="364.7" r="3.2"/><circle cx="597.1" cy="364.7" r="3.2"/><circle cx="610.2" cy="364.7" r="3.2"/><circle cx="413.5" cy="377.8" r="3.2"/><circle cx="426.5" cy="377.8" r="3.2"/><circle cx="649.5" cy="377.8" r="3.2"/><circle cx="662.5" cy="377.8" r="3.2"/><circle cx="465.8" cy="377.8" r="3.2"/><circle cx="478.9" cy="377.8" r="3.2"/><circle cx="492.0" cy="377.8" r="3.2"/><circle cx="505.1" cy="377.8" r="3.2"/><circle cx="518.2" cy="377.8" r="3.2"/><circle cx="557.8" cy="377.8" r="3.2"/><circle cx="570.9" cy="377.8" r="3.2"/><circle cx="584.0" cy="377.8" r="3.2"/><circle cx="597.1" cy="377.8" r="3.2"/><circle cx="610.2" cy="377.8" r="3.2"/><circle cx="413.5" cy="391.0" r="3.2"/><circle cx="426.5" cy="391.0" r="3.2"/><circle cx="649.5" cy="391.0" r="3.2"/><circle cx="662.5" cy="391.0" r="3.2"/><circle cx="465.8" cy="391.0" r="3.2"/><circle cx="478.9" cy="391.0" r="3.2"/><circle cx="492.0" cy="391.0" r="3.2"/><circle cx="505.1" cy="391.0" r="3.2"/><circle cx="518.2" cy="391.0" r="3.2"/><circle cx="557.8" cy="391.0" r="3.2"/><circle cx="570.9" cy="391.0" r="3.2"/><circle cx="584.0" cy="391.0" r="3.2"/><circle cx="597.1" cy="391.0" r="3.2"/><circle cx="610.2" cy="391.0" r="3.2"/><circle cx="413.5" cy="404.1" r="3.2"/><circle cx="426.5" cy="404.1" r="3.2"/><circle cx="649.5" cy="404.1" r="3.2"/><circle cx="662.5" cy="404.1" r="3.2"/><circle cx="465.8" cy="404.1" r="3.2"/><circle cx="478.9" cy="404.1" r="3.2"/><circle cx="492.0" cy="404.1" r="3.2"/><circle cx="505.1" cy="404.1" r="3.2"/><circle cx="518.2" cy="404.1" r="3.2"/><circle cx="557.8" cy="404.1" r="3.2"/><circle cx="570.9" cy="404.1" r="3.2"/><circle cx="584.0" cy="404.1" r="3.2"/><circle cx="597.1" cy="404.1" r="3.2"/><circle cx="610.2" cy="404.1" r="3.2"/><circle cx="413.5" cy="417.2" r="3.2"/><circle cx="426.5" cy="417.2" r="3.2"/><circle cx="649.5" cy="417.2" r="3.2"/><circle cx="662.5" cy="417.2" r="3.2"/><circle cx="465.8" cy="417.2" r="3.2"/><circle cx="478.9" cy="417.2" r="3.2"/><circle cx="492.0" cy="417.2" r="3.2"/><circle cx="505.1" cy="417.2" r="3.2"/><circle cx="518.2" cy="417.2" r="3.2"/><circle cx="557.8" cy="417.2" r="3.2"/><circle cx="570.9" cy="417.2" r="3.2"/><circle cx="584.0" cy="417.2" r="3.2"/><circle cx="597.1" cy="417.2" r="3.2"/><circle cx="610.2" cy="417.2" r="3.2"/><circle cx="413.5" cy="430.3" r="3.2"/><circle cx="426.5" cy="430.3" r="3.2"/><circle cx="649.5" cy="430.3" r="3.2"/><circle cx="662.5" cy="430.3" r="3.2"/><circle cx="465.8" cy="430.3" r="3.2"/><circle cx="478.9" cy="430.3" r="3.2"/><circle cx="492.0" cy="430.3" r="3.2"/><circle cx="505.1" cy="430.3" r="3.2"/><circle cx="518.2" cy="430.3" r="3.2"/><circle cx="557.8" cy="430.3" r="3.2"/><circle cx="570.9" cy="430.3" r="3.2"/><circle cx="584.0" cy="430.3" r="3.2"/><circle cx="597.1" cy="430.3" r="3.2"/><circle cx="610.2" cy="430.3" r="3.2"/><circle cx="413.5" cy="443.4" r="3.2"/><circle cx="426.5" cy="443.4" r="3.2"/><circle cx="649.5" cy="443.4" r="3.2"/><circle cx="662.5" cy="443.4" r="3.2"/><circle cx="465.8" cy="443.4" r="3.2"/><circle cx="478.9" cy="443.4" r="3.2"/><circle cx="492.0" cy="443.4" r="3.2"/><circle cx="505.1" cy="443.4" r="3.2"/><circle cx="518.2" cy="443.4" r="3.2"/><circle cx="557.8" cy="443.4" r="3.2"/><circle cx="570.9" cy="443.4" r="3.2"/><circle cx="584.0" cy="443.4" r="3.2"/><circle cx="597.1" cy="443.4" r="3.2"/><circle cx="610.2" cy="443.4" r="3.2"/><circle cx="413.5" cy="456.5" r="3.2"/><circle cx="426.5" cy="456.5" r="3.2"/><circle cx="649.5" cy="456.5" r="3.2"/><circle cx="662.5" cy="456.5" r="3.2"/><circle cx="465.8" cy="456.5" r="3.2"/><circle cx="478.9" cy="456.5" r="3.2"/><circle cx="492.0" cy="456.5" r="3.2"/><circle cx="505.1" cy="456.5" r="3.2"/><circle cx="518.2" cy="456.5" r="3.2"/><circle cx="557.8" cy="456.5" r="3.2"/><circle cx="570.9" cy="456.5" r="3.2"/><circle cx="584.0" cy="456.5" r="3.2"/><circle cx="597.1" cy="456.5" r="3.2"/><circle cx="610.2" cy="456.5" r="3.2"/><circle cx="413.5" cy="469.6" r="3.2"/><circle cx="426.5" cy="469.6" r="3.2"/><circle cx="649.5" cy="469.6" r="3.2"/><circle cx="662.5" cy="469.6" r="3.2"/><circle cx="465.8" cy="469.6" r="3.2"/><circle cx="478.9" cy="469.6" r="3.2"/><circle cx="492.0" cy="469.6" r="3.2"/><circle cx="505.1" cy="469.6" r="3.2"/><circle cx="518.2" cy="469.6" r="3.2"/><circle cx="557.8" cy="469.6" r="3.2"/><circle cx="570.9" cy="469.6" r="3.2"/><circle cx="584.0" cy="469.6" r="3.2"/><circle cx="597.1" cy="469.6" r="3.2"/><circle cx="610.2" cy="469.6" r="3.2"/><circle cx="413.5" cy="482.7" r="3.2"/><circle cx="426.5" cy="482.7" r="3.2"/><circle cx="649.5" cy="482.7" r="3.2"/><circle cx="662.5" cy="482.7" r="3.2"/><circle cx="465.8" cy="482.7" r="3.2"/><circle cx="478.9" cy="482.7" r="3.2"/><circle cx="492.0" cy="482.7" r="3.2"/><circle cx="505.1" cy="482.7" r="3.2"/><circle cx="518.2" cy="482.7" r="3.2"/><circle cx="557.8" cy="482.7" r="3.2"/><circle cx="570.9" cy="482.7" r="3.2"/><circle cx="584.0" cy="482.7" r="3.2"/><circle cx="597.1" cy="482.7" r="3.2"/><circle cx="610.2" cy="482.7" r="3.2"/></g>
<g fill="#d8d8d8"><circle cx="413.0" cy="102.3" r="2.9"/><circle cx="426.0" cy="102.3" r="2.9"/><circle cx="649.0" cy="102.3" r="2.9"/><circle cx="662.0" cy="102.3" r="2.9"/><circle cx="465.3" cy="102.3" r="2.9"/><circle cx="478.4" cy="102.3" r="2.9"/><circle cx="491.5" cy="102.3" r="2.9"/><circle cx="504.6" cy="102.3" r="2.9"/><circle cx="517.7" cy="102.3" r="2.9"/><circle cx="557.3" cy="102.3" r="2.9"/><circle cx="570.4" cy="102.3" r="2.9"/><circle cx="583.5" cy="102.3" r="2.9"/><circle cx="596.6" cy="102.3" r="2.9"/><circle cx="609.7" cy="102.3" r="2.9"/><circle cx="413.0" cy="115.4" r="2.9"/><circle cx="426.0" cy="115.4" r="2.9"/><circle cx="649.0" cy="115.4" r="2.9"/><circle cx="662.0" cy="115.4" r="2.9"/><circle cx="465.3" cy="115.4" r="2.9"/><circle cx="478.4" cy="115.4" r="2.9"/><circle cx="491.5" cy="115.4" r="2.9"/><circle cx="504.6" cy="115.4" r="2.9"/><circle cx="517.7" cy="115.4" r="2.9"/><circle cx="557.3" cy="115.4" r="2.9"/><circle cx="570.4" cy="115.4" r="2.9"/><circle cx="583.5" cy="115.4" r="2.9"/><circle cx="596.6" cy="115.4" r="2.9"/><circle cx="609.7" cy="115.4" r="2.9"/><circle cx="413.0" cy="128.5" r="2.9"/><circle cx="426.0" cy="128.5" r="2.9"/><circle cx="649.0" cy="128.5" r="2.9"/><circle cx="662.0" cy="128.5" r="2.9"/><circle cx="465.3" cy="128.5" r="2.9"/><circle cx="478.4" cy="128.5" r="2.9"/><circle cx="491.5" cy="128.5" r="2.9"/><circle cx="504.6" cy="128.5" r="2.9"/><circle cx="517.7" cy="128.5" r="2.9"/><circle cx="557.3" cy="128.5" r="2.9"/><circle cx="570.4" cy="128.5" r="2.9"/><circle cx="583.5" cy="128.5" r="2.9"/><circle cx="596.6" cy="128.5" r="2.9"/><circle cx="609.7" cy="128.5" r="2.9"/><circle cx="413.0" cy="141.6" r="2.9"/><circle cx="426.0" cy="141.6" r="2.9"/><circle cx="649.0" cy="141.6" r="2.9"/><circle cx="662.0" cy="141.6" r="2.9"/><circle cx="465.3" cy="141.6" r="2.9"/><circle cx="478.4" cy="141.6" r="2.9"/><circle cx="491.5" cy="141.6" r="2.9"/><circle cx="504.6" cy="141.6" r="2.9"/><circle cx="517.7" cy="141.6" r="2.9"/><circle cx="557.3" cy="141.6" r="2.9"/><circle cx="570.4" cy="141.6" r="2.9"/><circle cx="583.5" cy="141.6" r="2.9"/><circle cx="596.6" cy="141.6" r="2.9"/><circle cx="609.7" cy="141.6" r="2.9"/><circle cx="413.0" cy="154.7" r="2.9"/><circle cx="426.0" cy="154.7" r="2.9"/><circle cx="649.0" cy="154.7" r="2.9"/><circle cx="662.0" cy="154.7" r="2.9"/><circle cx="465.3" cy="154.7" r="2.9"/><circle cx="478.4" cy="154.7" r="2.9"/><circle cx="491.5" cy="154.7" r="2.9"/><circle cx="504.6" cy="154.7" r="2.9"/><circle cx="517.7" cy="154.7" r="2.9"/><circle cx="557.3" cy="154.7" r="2.9"/><circle cx="570.4" cy="154.7" r="2.9"/><circle cx="583.5" cy="154.7" r="2.9"/><circle cx="596.6" cy="154.7" r="2.9"/><circle cx="609.7" cy="154.7" r="2.9"/><circle cx="413.0" cy="167.8" r="2.9"/><circle cx="426.0" cy="167.8" r="2.9"/><circle cx="649.0" cy="167.8" r="2.9"/><circle cx="662.0" cy="167.8" r="2.9"/><circle cx="465.3" cy="167.8" r="2.9"/><circle cx="478.4" cy="167.8" r="2.9"/><circle cx="491.5" cy="167.8" r="2.9"/><circle cx="504.6" cy="167.8" r="2.9"/><circle cx="517.7" cy="167.8" r="2.9"/><circle cx="557.3" cy="167.8" r="2.9"/><circle cx="570.4" cy="167.8" r="2.9"/><circle cx="583.5" cy="167.8" r="2.9"/><circle cx="596.6" cy="167.8" r="2.9"/><circle cx="609.7" cy="167.8" r="2.9"/><circle cx="413.0" cy="180.9" r="2.9"/><circle cx="426.0" cy="180.9" r="2.9"/><circle cx="649.0" cy="180.9" r="2.9"/><circle cx="662.0" cy="180.9" r="2.9"/><circle cx="465.3" cy="180.9" r="2.9"/><circle cx="478.4" cy="180.9" r="2.9"/><circle cx="491.5" cy="180.9" r="2.9"/><circle cx="504.6" cy="180.9" r="2.9"/><circle cx="517.7" cy="180.9" r="2.9"/><circle cx="557.3" cy="180.9" r="2.9"/><circle cx="570.4" cy="180.9" r="2.9"/><circle cx="583.5" cy="180.9" r="2.9"/><circle cx="596.6" cy="180.9" r="2.9"/><circle cx="609.7" cy="180.9" r="2.9"/><circle cx="413.0" cy="194.0" r="2.9"/><circle cx="426.0" cy="194.0" r="2.9"/><circle cx="649.0" cy="194.0" r="2.9"/><circle cx="662.0" cy="194.0" r="2.9"/><circle cx="465.3" cy="194.0" r="2.9"/><circle cx="478.4" cy="194.0" r="2.9"/><circle cx="491.5" cy="194.0" r="2.9"/><circle cx="504.6" cy="194.0" r="2.9"/><circle cx="517.7" cy="194.0" r="2.9"/><circle cx="557.3" cy="194.0" r="2.9"/><circle cx="570.4" cy="194.0" r="2.9"/><circle cx="583.5" cy="194.0" r="2.9"/><circle cx="596.6" cy="194.0" r="2.9"/><circle cx="609.7" cy="194.0" r="2.9"/><circle cx="413.0" cy="207.2" r="2.9"/><circle cx="426.0" cy="207.2" r="2.9"/><circle cx="649.0" cy="207.2" r="2.9"/><circle cx="662.0" cy="207.2" r="2.9"/><circle cx="465.3" cy="207.2" r="2.9"/><circle cx="478.4" cy="207.2" r="2.9"/><circle cx="491.5" cy="207.2" r="2.9"/><circle cx="504.6" cy="207.2" r="2.9"/><circle cx="517.7" cy="207.2" r="2.9"/><circle cx="557.3" cy="207.2" r="2.9"/><circle cx="570.4" cy="207.2" r="2.9"/><circle cx="583.5" cy="207.2" r="2.9"/><circle cx="596.6" cy="207.2" r="2.9"/><circle cx="609.7" cy="207.2" r="2.9"/><circle cx="413.0" cy="220.3" r="2.9"/><circle cx="426.0" cy="220.3" r="2.9"/><circle cx="649.0" cy="220.3" r="2.9"/><circle cx="662.0" cy="220.3" r="2.9"/><circle cx="465.3" cy="220.3" r="2.9"/><circle cx="478.4" cy="220.3" r="2.9"/><circle cx="491.5" cy="220.3" r="2.9"/><circle cx="504.6" cy="220.3" r="2.9"/><circle cx="517.7" cy="220.3" r="2.9"/><circle cx="557.3" cy="220.3" r="2.9"/><circle cx="570.4" cy="220.3" r="2.9"/><circle cx="583.5" cy="220.3" r="2.9"/><circle cx="596.6" cy="220.3" r="2.9"/><circle cx="609.7" cy="220.3" r="2.9"/><circle cx="413.0" cy="233.4" r="2.9"/><circle cx="426.0" cy="233.4" r="2.9"/><circle cx="649.0" cy="233.4" r="2.9"/><circle cx="662.0" cy="233.4" r="2.9"/><circle cx="465.3" cy="233.4" r="2.9"/><circle cx="478.4" cy="233.4" r="2.9"/><circle cx="491.5" cy="233.4" r="2.9"/><circle cx="504.6" cy="233.4" r="2.9"/><circle cx="517.7" cy="233.4" r="2.9"/><circle cx="557.3" cy="233.4" r="2.9"/><circle cx="570.4" cy="233.4" r="2.9"/><circle cx="583.5" cy="233.4" r="2.9"/><circle cx="596.6" cy="233.4" r="2.9"/><circle cx="609.7" cy="233.4" r="2.9"/><circle cx="413.0" cy="246.5" r="2.9"/><circle cx="426.0" cy="246.5" r="2.9"/><circle cx="649.0" cy="246.5" r="2.9"/><circle cx="662.0" cy="246.5" r="2.9"/><circle cx="465.3" cy="246.5" r="2.9"/><circle cx="478.4" cy="246.5" r="2.9"/><circle cx="491.5" cy="246.5" r="2.9"/><circle cx="504.6" cy="246.5" r="2.9"/><circle cx="517.7" cy="246.5" r="2.9"/><circle cx="557.3" cy="246.5" r="2.9"/><circle cx="570.4" cy="246.5" r="2.9"/><circle cx="583.5" cy="246.5" r="2.9"/><circle cx="596.6" cy="246.5" r="2.9"/><circle cx="609.7" cy="246.5" r="2.9"/><circle cx="413.0" cy="259.6" r="2.9"/><circle cx="426.0" cy="259.6" r="2.9"/><circle cx="649.0" cy="259.6" r="2.9"/><circle cx="662.0" cy="259.6" r="2.9"/><circle cx="465.3" cy="259.6" r="2.9"/><circle cx="478.4" cy="259.6" r="2.9"/><circle cx="491.5" cy="259.6" r="2.9"/><circle cx="504.6" cy="259.6" r="2.9"/><circle cx="517.7" cy="259.6" r="2.9"/><circle cx="557.3" cy="259.6" r="2.9"/><circle cx="570.4" cy="259.6" r="2.9"/><circle cx="583.5" cy="259.6" r="2.9"/><circle cx="596.6" cy="259.6" r="2.9"/><circle cx="609.7" cy="259.6" r="2.9"/><circle cx="413.0" cy="272.7" r="2.9"/><circle cx="426.0" cy="272.7" r="2.9"/><circle cx="649.0" cy="272.7" r="2.9"/><circle cx="662.0" cy="272.7" r="2.9"/><circle cx="465.3" cy="272.7" r="2.9"/><circle cx="478.4" cy="272.7" r="2.9"/><circle cx="491.5" cy="272.7" r="2.9"/><circle cx="504.6" cy="272.7" r="2.9"/><circle cx="517.7" cy="272.7" r="2.9"/><circle cx="557.3" cy="272.7" r="2.9"/><circle cx="570.4" cy="272.7" r="2.9"/><circle cx="583.5" cy="272.7" r="2.9"/><circle cx="596.6" cy="272.7" r="2.9"/><circle cx="609.7" cy="272.7" r="2.9"/><circle cx="413.0" cy="285.8" r="2.9"/><circle cx="426.0" cy="285.8" r="2.9"/><circle cx="649.0" cy="285.8" r="2.9"/><circle cx="662.0" cy="285.8" r="2.9"/><circle cx="465.3" cy="285.8" r="2.9"/><circle cx="478.4" cy="285.8" r="2.9"/><circle cx="491.5" cy="285.8" r="2.9"/><circle cx="504.6" cy="285.8" r="2.9"/><circle cx="517.7" cy="285.8" r="2.9"/><circle cx="557.3" cy="285.8" r="2.9"/><circle cx="570.4" cy="285.8" r="2.9"/><circle cx="583.5" cy="285.8" r="2.9"/><circle cx="596.6" cy="285.8" r="2.9"/><circle cx="609.7" cy="285.8" r="2.9"/><circle cx="413.0" cy="298.9" r="2.9"/><circle cx="426.0" cy="298.9" r="2.9"/><circle cx="649.0" cy="298.9" r="2.9"/><circle cx="662.0" cy="298.9" r="2.9"/><circle cx="465.3" cy="298.9" r="2.9"/><circle cx="478.4" cy="298.9" r="2.9"/><circle cx="491.5" cy="298.9" r="2.9"/><circle cx="504.6" cy="298.9" r="2.9"/><circle cx="517.7" cy="298.9" r="2.9"/><circle cx="557.3" cy="298.9" r="2.9"/><circle cx="570.4" cy="298.9" r="2.9"/><circle cx="583.5" cy="298.9" r="2.9"/><circle cx="596.6" cy="298.9" r="2.9"/><circle cx="609.7" cy="298.9" r="2.9"/><circle cx="413.0" cy="312.0" r="2.9"/><circle cx="426.0" cy="312.0" r="2.9"/><circle cx="649.0" cy="312.0" r="2.9"/><circle cx="662.0" cy="312.0" r="2.9"/><circle cx="465.3" cy="312.0" r="2.9"/><circle cx="478.4" cy="312.0" r="2.9"/><circle cx="491.5" cy="312.0" r="2.9"/><circle cx="504.6" cy="312.0" r="2.9"/><circle cx="517.7" cy="312.0" r="2.9"/><circle cx="557.3" cy="312.0" r="2.9"/><circle cx="570.4" cy="312.0" r="2.9"/><circle cx="583.5" cy="312.0" r="2.9"/><circle cx="596.6" cy="312.0" r="2.9"/><circle cx="609.7" cy="312.0" r="2.9"/><circle cx="413.0" cy="325.1" r="2.9"/><circle cx="426.0" cy="325.1" r="2.9"/><circle cx="649.0" cy="325.1" r="2.9"/><circle cx="662.0" cy="325.1" r="2.9"/><circle cx="465.3" cy="325.1" r="2.9"/><circle cx="478.4" cy="325.1" r="2.9"/><circle cx="491.5" cy="325.1" r="2.9"/><circle cx="504.6" cy="325.1" r="2.9"/><circle cx="517.7" cy="325.1" r="2.9"/><circle cx="557.3" cy="325.1" r="2.9"/><circle cx="570.4" cy="325.1" r="2.9"/><circle cx="583.5" cy="325.1" r="2.9"/><circle cx="596.6" cy="325.1" r="2.9"/><circle cx="609.7" cy="325.1" r="2.9"/><circle cx="413.0" cy="338.2" r="2.9"/><circle cx="426.0" cy="338.2" r="2.9"/><circle cx="649.0" cy="338.2" r="2.9"/><circle cx="662.0" cy="338.2" r="2.9"/><circle cx="465.3" cy="338.2" r="2.9"/><circle cx="478.4" cy="338.2" r="2.9"/><circle cx="491.5" cy="338.2" r="2.9"/><circle cx="504.6" cy="338.2" r="2.9"/><circle cx="517.7" cy="338.2" r="2.9"/><circle cx="557.3" cy="338.2" r="2.9"/><circle cx="570.4" cy="338.2" r="2.9"/><circle cx="583.5" cy="338.2" r="2.9"/><circle cx="596.6" cy="338.2" r="2.9"/><circle cx="609.7" cy="338.2" r="2.9"/><circle cx="413.0" cy="351.3" r="2.9"/><circle cx="426.0" cy="351.3" r="2.9"/><circle cx="649.0" cy="351.3" r="2.9"/><circle cx="662.0" cy="351.3" r="2.9"/><circle cx="465.3" cy="351.3" r="2.9"/><circle cx="478.4" cy="351.3" r="2.9"/><circle cx="491.5" cy="351.3" r="2.9"/><circle cx="504.6" cy="351.3" r="2.9"/><circle cx="517.7" cy="351.3" r="2.9"/><circle cx="557.3" cy="351.3" r="2.9"/><circle cx="570.4" cy="351.3" r="2.9"/><circle cx="583.5" cy="351.3" r="2.9"/><circle cx="596.6" cy="351.3" r="2.9"/><circle cx="609.7" cy="351.3" r="2.9"/><circle cx="413.0" cy="364.4" r="2.9"/><circle cx="426.0" cy="364.4" r="2.9"/><circle cx="649.0" cy="364.4" r="2.9"/><circle cx="662.0" cy="364.4" r="2.9"/><circle cx="465.3" cy="364.4" r="2.9"/><circle cx="478.4" cy="364.4" r="2.9"/><circle cx="491.5" cy="364.4" r="2.9"/><circle cx="504.6" cy="364.4" r="2.9"/><circle cx="517.7" cy="364.4" r="2.9"/><circle cx="557.3" cy="364.4" r="2.9"/><circle cx="570.4" cy="364.4" r="2.9"/><circle cx="583.5" cy="364.4" r="2.9"/><circle cx="596.6" cy="364.4" r="2.9"/><circle cx="609.7" cy="364.4" r="2.9"/><circle cx="413.0" cy="377.5" r="2.9"/><circle cx="426.0" cy="377.5" r="2.9"/><circle cx="649.0" cy="377.5" r="2.9"/><circle cx="662.0" cy="377.5" r="2.9"/><circle cx="465.3" cy="377.5" r="2.9"/><circle cx="478.4" cy="377.5" r="2.9"/><circle cx="491.5" cy="377.5" r="2.9"/><circle cx="504.6" cy="377.5" r="2.9"/><circle cx="517.7" cy="377.5" r="2.9"/><circle cx="557.3" cy="377.5" r="2.9"/><circle cx="570.4" cy="377.5" r="2.9"/><circle cx="583.5" cy="377.5" r="2.9"/><circle cx="596.6" cy="377.5" r="2.9"/><circle cx="609.7" cy="377.5" r="2.9"/><circle cx="413.0" cy="390.7" r="2.9"/><circle cx="426.0" cy="390.7" r="2.9"/><circle cx="649.0" cy="390.7" r="2.9"/><circle cx="662.0" cy="390.7" r="2.9"/><circle cx="465.3" cy="390.7" r="2.9"/><circle cx="478.4" cy="390.7" r="2.9"/><circle cx="491.5" cy="390.7" r="2.9"/><circle cx="504.6" cy="390.7" r="2.9"/><circle cx="517.7" cy="390.7" r="2.9"/><circle cx="557.3" cy="390.7" r="2.9"/><circle cx="570.4" cy="390.7" r="2.9"/><circle cx="583.5" cy="390.7" r="2.9"/><circle cx="596.6" cy="390.7" r="2.9"/><circle cx="609.7" cy="390.7" r="2.9"/><circle cx="413.0" cy="403.8" r="2.9"/><circle cx="426.0" cy="403.8" r="2.9"/><circle cx="649.0" cy="403.8" r="2.9"/><circle cx="662.0" cy="403.8" r="2.9"/><circle cx="465.3" cy="403.8" r="2.9"/><circle cx="478.4" cy="403.8" r="2.9"/><circle cx="491.5" cy="403.8" r="2.9"/><circle cx="504.6" cy="403.8" r="2.9"/><circle cx="517.7" cy="403.8" r="2.9"/><circle cx="557.3" cy="403.8" r="2.9"/><circle cx="570.4" cy="403.8" r="2.9"/><circle cx="583.5" cy="403.8" r="2.9"/><circle cx="596.6" cy="403.8" r="2.9"/><circle cx="609.7" cy="403.8" r="2.9"/><circle cx="413.0" cy="416.9" r="2.9"/><circle cx="426.0" cy="416.9" r="2.9"/><circle cx="649.0" cy="416.9" r="2.9"/><circle cx="662.0" cy="416.9" r="2.9"/><circle cx="465.3" cy="416.9" r="2.9"/><circle cx="478.4" cy="416.9" r="2.9"/><circle cx="491.5" cy="416.9" r="2.9"/><circle cx="504.6" cy="416.9" r="2.9"/><circle cx="517.7" cy="416.9" r="2.9"/><circle cx="557.3" cy="416.9" r="2.9"/><circle cx="570.4" cy="416.9" r="2.9"/><circle cx="583.5" cy="416.9" r="2.9"/><circle cx="596.6" cy="416.9" r="2.9"/><circle cx="609.7" cy="416.9" r="2.9"/><circle cx="413.0" cy="430.0" r="2.9"/><circle cx="426.0" cy="430.0" r="2.9"/><circle cx="649.0" cy="430.0" r="2.9"/><circle cx="662.0" cy="430.0" r="2.9"/><circle cx="465.3" cy="430.0" r="2.9"/><circle cx="478.4" cy="430.0" r="2.9"/><circle cx="491.5" cy="430.0" r="2.9"/><circle cx="504.6" cy="430.0" r="2.9"/><circle cx="517.7" cy="430.0" r="2.9"/><circle cx="557.3" cy="430.0" r="2.9"/><circle cx="570.4" cy="430.0" r="2.9"/><circle cx="583.5" cy="430.0" r="2.9"/><circle cx="596.6" cy="430.0" r="2.9"/><circle cx="609.7" cy="430.0" r="2.9"/><circle cx="413.0" cy="443.1" r="2.9"/><circle cx="426.0" cy="443.1" r="2.9"/><circle cx="649.0" cy="443.1" r="2.9"/><circle cx="662.0" cy="443.1" r="2.9"/><circle cx="465.3" cy="443.1" r="2.9"/><circle cx="478.4" cy="443.1" r="2.9"/><circle cx="491.5" cy="443.1" r="2.9"/><circle cx="504.6" cy="443.1" r="2.9"/><circle cx="517.7" cy="443.1" r="2.9"/><circle cx="557.3" cy="443.1" r="2.9"/><circle cx="570.4" cy="443.1" r="2.9"/><circle cx="583.5" cy="443.1" r="2.9"/><circle cx="596.6" cy="443.1" r="2.9"/><circle cx="609.7" cy="443.1" r="2.9"/><circle cx="413.0" cy="456.2" r="2.9"/><circle cx="426.0" cy="456.2" r="2.9"/><circle cx="649.0" cy="456.2" r="2.9"/><circle cx="662.0" cy="456.2" r="2.9"/><circle cx="465.3" cy="456.2" r="2.9"/><circle cx="478.4" cy="456.2" r="2.9"/><circle cx="491.5" cy="456.2" r="2.9"/><circle cx="504.6" cy="456.2" r="2.9"/><circle cx="517.7" cy="456.2" r="2.9"/><circle cx="557.3" cy="456.2" r="2.9"/><circle cx="570.4" cy="456.2" r="2.9"/><circle cx="583.5" cy="456.2" r="2.9"/><circle cx="596.6" cy="456.2" r="2.9"/><circle cx="609.7" cy="456.2" r="2.9"/><circle cx="413.0" cy="469.3" r="2.9"/><circle cx="426.0" cy="469.3" r="2.9"/><circle cx="649.0" cy="469.3" r="2.9"/><circle cx="662.0" cy="469.3" r="2.9"/><circle cx="465.3" cy="469.3" r="2.9"/><circle cx="478.4" cy="469.3" r="2.9"/><circle cx="491.5" cy="469.3" r="2.9"/><circle cx="504.6" cy="469.3" r="2.9"/><circle cx="517.7" cy="469.3" r="2.9"/><circle cx="557.3" cy="469.3" r="2.9"/><circle cx="570.4" cy="469.3" r="2.9"/><circle cx="583.5" cy="469.3" r="2.9"/><circle cx="596.6" cy="469.3" r="2.9"/><circle cx="609.7" cy="469.3" r="2.9"/><circle cx="413.0" cy="482.4" r="2.9"/><circle cx="426.0" cy="482.4" r="2.9"/><circle cx="649.0" cy="482.4" r="2.9"/><circle cx="662.0" cy="482.4" r="2.9"/><circle cx="465.3" cy="482.4" r="2.9"/><circle cx="478.4" cy="482.4" r="2.9"/><circle cx="491.5" cy="482.4" r="2.9"/><circle cx="504.6" cy="482.4" r="2.9"/><circle cx="517.7" cy="482.4" r="2.9"/><circle cx="557.3" cy="482.4" r="2.9"/><circle cx="570.4" cy="482.4" r="2.9"/><circle cx="583.5" cy="482.4" r="2.9"/><circle cx="596.6" cy="482.4" r="2.9"/><circle cx="609.7" cy="482.4" r="2.9"/></g>
<g fill="#2e2e2e"><circle cx="413.0" cy="102.3" r="2.05"/><circle cx="426.0" cy="102.3" r="2.05"/><circle cx="649.0" cy="102.3" r="2.05"/><circle cx="662.0" cy="102.3" r="2.05"/><circle cx="465.3" cy="102.3" r="2.05"/><circle cx="478.4" cy="102.3" r="2.05"/><circle cx="491.5" cy="102.3" r="2.05"/><circle cx="504.6" cy="102.3" r="2.05"/><circle cx="517.7" cy="102.3" r="2.05"/><circle cx="557.3" cy="102.3" r="2.05"/><circle cx="570.4" cy="102.3" r="2.05"/><circle cx="583.5" cy="102.3" r="2.05"/><circle cx="596.6" cy="102.3" r="2.05"/><circle cx="609.7" cy="102.3" r="2.05"/><circle cx="413.0" cy="115.4" r="2.05"/><circle cx="426.0" cy="115.4" r="2.05"/><circle cx="649.0" cy="115.4" r="2.05"/><circle cx="662.0" cy="115.4" r="2.05"/><circle cx="465.3" cy="115.4" r="2.05"/><circle cx="478.4" cy="115.4" r="2.05"/><circle cx="491.5" cy="115.4" r="2.05"/><circle cx="504.6" cy="115.4" r="2.05"/><circle cx="517.7" cy="115.4" r="2.05"/><circle cx="557.3" cy="115.4" r="2.05"/><circle cx="570.4" cy="115.4" r="2.05"/><circle cx="583.5" cy="115.4" r="2.05"/><circle cx="596.6" cy="115.4" r="2.05"/><circle cx="609.7" cy="115.4" r="2.05"/><circle cx="413.0" cy="128.5" r="2.05"/><circle cx="426.0" cy="128.5" r="2.05"/><circle cx="649.0" cy="128.5" r="2.05"/><circle cx="662.0" cy="128.5" r="2.05"/><circle cx="465.3" cy="128.5" r="2.05"/><circle cx="478.4" cy="128.5" r="2.05"/><circle cx="491.5" cy="128.5" r="2.05"/><circle cx="504.6" cy="128.5" r="2.05"/><circle cx="517.7" cy="128.5" r="2.05"/><circle cx="557.3" cy="128.5" r="2.05"/><circle cx="570.4" cy="128.5" r="2.05"/><circle cx="583.5" cy="128.5" r="2.05"/><circle cx="596.6" cy="128.5" r="2.05"/><circle cx="609.7" cy="128.5" r="2.05"/><circle cx="413.0" cy="141.6" r="2.05"/><circle cx="426.0" cy="141.6" r="2.05"/><circle cx="649.0" cy="141.6" r="2.05"/><circle cx="662.0" cy="141.6" r="2.05"/><circle cx="465.3" cy="141.6" r="2.05"/><circle cx="478.4" cy="141.6" r="2.05"/><circle cx="491.5" cy="141.6" r="2.05"/><circle cx="504.6" cy="141.6" r="2.05"/><circle cx="517.7" cy="141.6" r="2.05"/><circle cx="557.3" cy="141.6" r="2.05"/><circle cx="570.4" cy="141.6" r="2.05"/><circle cx="583.5" cy="141.6" r="2.05"/><circle cx="596.6" cy="141.6" r="2.05"/><circle cx="609.7" cy="141.6" r="2.05"/><circle cx="413.0" cy="154.7" r="2.05"/><circle cx="426.0" cy="154.7" r="2.05"/><circle cx="649.0" cy="154.7" r="2.05"/><circle cx="662.0" cy="154.7" r="2.05"/><circle cx="465.3" cy="154.7" r="2.05"/><circle cx="478.4" cy="154.7" r="2.05"/><circle cx="491.5" cy="154.7" r="2.05"/><circle cx="504.6" cy="154.7" r="2.05"/><circle cx="517.7" cy="154.7" r="2.05"/><circle cx="557.3" cy="154.7" r="2.05"/><circle cx="570.4" cy="154.7" r="2.05"/><circle cx="583.5" cy="154.7" r="2.05"/><circle cx="596.6" cy="154.7" r="2.05"/><circle cx="609.7" cy="154.7" r="2.05"/><circle cx="413.0" cy="167.8" r="2.05"/><circle cx="426.0" cy="167.8" r="2.05"/><circle cx="649.0" cy="167.8" r="2.05"/><circle cx="662.0" cy="167.8" r="2.05"/><circle cx="465.3" cy="167.8" r="2.05"/><circle cx="478.4" cy="167.8" r="2.05"/><circle cx="491.5" cy="167.8" r="2.05"/><circle cx="504.6" cy="167.8" r="2.05"/><circle cx="517.7" cy="167.8" r="2.05"/><circle cx="557.3" cy="167.8" r="2.05"/><circle cx="570.4" cy="167.8" r="2.05"/><circle cx="583.5" cy="167.8" r="2.05"/><circle cx="596.6" cy="167.8" r="2.05"/><circle cx="609.7" cy="167.8" r="2.05"/><circle cx="413.0" cy="180.9" r="2.05"/><circle cx="426.0" cy="180.9" r="2.05"/><circle cx="649.0" cy="180.9" r="2.05"/><circle cx="662.0" cy="180.9" r="2.05"/><circle cx="465.3" cy="180.9" r="2.05"/><circle cx="478.4" cy="180.9" r="2.05"/><circle cx="491.5" cy="180.9" r="2.05"/><circle cx="504.6" cy="180.9" r="2.05"/><circle cx="517.7" cy="180.9" r="2.05"/><circle cx="557.3" cy="180.9" r="2.05"/><circle cx="570.4" cy="180.9" r="2.05"/><circle cx="583.5" cy="180.9" r="2.05"/><circle cx="596.6" cy="180.9" r="2.05"/><circle cx="609.7" cy="180.9" r="2.05"/><circle cx="413.0" cy="194.0" r="2.05"/><circle cx="426.0" cy="194.0" r="2.05"/><circle cx="649.0" cy="194.0" r="2.05"/><circle cx="662.0" cy="194.0" r="2.05"/><circle cx="465.3" cy="194.0" r="2.05"/><circle cx="478.4" cy="194.0" r="2.05"/><circle cx="491.5" cy="194.0" r="2.05"/><circle cx="504.6" cy="194.0" r="2.05"/><circle cx="517.7" cy="194.0" r="2.05"/><circle cx="557.3" cy="194.0" r="2.05"/><circle cx="570.4" cy="194.0" r="2.05"/><circle cx="583.5" cy="194.0" r="2.05"/><circle cx="596.6" cy="194.0" r="2.05"/><circle cx="609.7" cy="194.0" r="2.05"/><circle cx="413.0" cy="207.2" r="2.05"/><circle cx="426.0" cy="207.2" r="2.05"/><circle cx="649.0" cy="207.2" r="2.05"/><circle cx="662.0" cy="207.2" r="2.05"/><circle cx="465.3" cy="207.2" r="2.05"/><circle cx="478.4" cy="207.2" r="2.05"/><circle cx="491.5" cy="207.2" r="2.05"/><circle cx="504.6" cy="207.2" r="2.05"/><circle cx="517.7" cy="207.2" r="2.05"/><circle cx="557.3" cy="207.2" r="2.05"/><circle cx="570.4" cy="207.2" r="2.05"/><circle cx="583.5" cy="207.2" r="2.05"/><circle cx="596.6" cy="207.2" r="2.05"/><circle cx="609.7" cy="207.2" r="2.05"/><circle cx="413.0" cy="220.3" r="2.05"/><circle cx="426.0" cy="220.3" r="2.05"/><circle cx="649.0" cy="220.3" r="2.05"/><circle cx="662.0" cy="220.3" r="2.05"/><circle cx="465.3" cy="220.3" r="2.05"/><circle cx="478.4" cy="220.3" r="2.05"/><circle cx="491.5" cy="220.3" r="2.05"/><circle cx="504.6" cy="220.3" r="2.05"/><circle cx="517.7" cy="220.3" r="2.05"/><circle cx="557.3" cy="220.3" r="2.05"/><circle cx="570.4" cy="220.3" r="2.05"/><circle cx="583.5" cy="220.3" r="2.05"/><circle cx="596.6" cy="220.3" r="2.05"/><circle cx="609.7" cy="220.3" r="2.05"/><circle cx="413.0" cy="233.4" r="2.05"/><circle cx="426.0" cy="233.4" r="2.05"/><circle cx="649.0" cy="233.4" r="2.05"/><circle cx="662.0" cy="233.4" r="2.05"/><circle cx="465.3" cy="233.4" r="2.05"/><circle cx="478.4" cy="233.4" r="2.05"/><circle cx="491.5" cy="233.4" r="2.05"/><circle cx="504.6" cy="233.4" r="2.05"/><circle cx="517.7" cy="233.4" r="2.05"/><circle cx="557.3" cy="233.4" r="2.05"/><circle cx="570.4" cy="233.4" r="2.05"/><circle cx="583.5" cy="233.4" r="2.05"/><circle cx="596.6" cy="233.4" r="2.05"/><circle cx="609.7" cy="233.4" r="2.05"/><circle cx="413.0" cy="246.5" r="2.05"/><circle cx="426.0" cy="246.5" r="2.05"/><circle cx="649.0" cy="246.5" r="2.05"/><circle cx="662.0" cy="246.5" r="2.05"/><circle cx="465.3" cy="246.5" r="2.05"/><circle cx="478.4" cy="246.5" r="2.05"/><circle cx="491.5" cy="246.5" r="2.05"/><circle cx="504.6" cy="246.5" r="2.05"/><circle cx="517.7" cy="246.5" r="2.05"/><circle cx="557.3" cy="246.5" r="2.05"/><circle cx="570.4" cy="246.5" r="2.05"/><circle cx="583.5" cy="246.5" r="2.05"/><circle cx="596.6" cy="246.5" r="2.05"/><circle cx="609.7" cy="246.5" r="2.05"/><circle cx="413.0" cy="259.6" r="2.05"/><circle cx="426.0" cy="259.6" r="2.05"/><circle cx="649.0" cy="259.6" r="2.05"/><circle cx="662.0" cy="259.6" r="2.05"/><circle cx="465.3" cy="259.6" r="2.05"/><circle cx="478.4" cy="259.6" r="2.05"/><circle cx="491.5" cy="259.6" r="2.05"/><circle cx="504.6" cy="259.6" r="2.05"/><circle cx="517.7" cy="259.6" r="2.05"/><circle cx="557.3" cy="259.6" r="2.05"/><circle cx="570.4" cy="259.6" r="2.05"/><circle cx="583.5" cy="259.6" r="2.05"/><circle cx="596.6" cy="259.6" r="2.05"/><circle cx="609.7" cy="259.6" r="2.05"/><circle cx="413.0" cy="272.7" r="2.05"/><circle cx="426.0" cy="272.7" r="2.05"/><circle cx="649.0" cy="272.7" r="2.05"/><circle cx="662.0" cy="272.7" r="2.05"/><circle cx="465.3" cy="272.7" r="2.05"/><circle cx="478.4" cy="272.7" r="2.05"/><circle cx="491.5" cy="272.7" r="2.05"/><circle cx="504.6" cy="272.7" r="2.05"/><circle cx="517.7" cy="272.7" r="2.05"/><circle cx="557.3" cy="272.7" r="2.05"/><circle cx="570.4" cy="272.7" r="2.05"/><circle cx="583.5" cy="272.7" r="2.05"/><circle cx="596.6" cy="272.7" r="2.05"/><circle cx="609.7" cy="272.7" r="2.05"/><circle cx="413.0" cy="285.8" r="2.05"/><circle cx="426.0" cy="285.8" r="2.05"/><circle cx="649.0" cy="285.8" r="2.05"/><circle cx="662.0" cy="285.8" r="2.05"/><circle cx="465.3" cy="285.8" r="2.05"/><circle cx="478.4" cy="285.8" r="2.05"/><circle cx="491.5" cy="285.8" r="2.05"/><circle cx="504.6" cy="285.8" r="2.05"/><circle cx="517.7" cy="285.8" r="2.05"/><circle cx="557.3" cy="285.8" r="2.05"/><circle cx="570.4" cy="285.8" r="2.05"/><circle cx="583.5" cy="285.8" r="2.05"/><circle cx="596.6" cy="285.8" r="2.05"/><circle cx="609.7" cy="285.8" r="2.05"/><circle cx="413.0" cy="298.9" r="2.05"/><circle cx="426.0" cy="298.9" r="2.05"/><circle cx="649.0" cy="298.9" r="2.05"/><circle cx="662.0" cy="298.9" r="2.05"/><circle cx="465.3" cy="298.9" r="2.05"/><circle cx="478.4" cy="298.9" r="2.05"/><circle cx="491.5" cy="298.9" r="2.05"/><circle cx="504.6" cy="298.9" r="2.05"/><circle cx="517.7" cy="298.9" r="2.05"/><circle cx="557.3" cy="298.9" r="2.05"/><circle cx="570.4" cy="298.9" r="2.05"/><circle cx="583.5" cy="298.9" r="2.05"/><circle cx="596.6" cy="298.9" r="2.05"/><circle cx="609.7" cy="298.9" r="2.05"/><circle cx="413.0" cy="312.0" r="2.05"/><circle cx="426.0" cy="312.0" r="2.05"/><circle cx="649.0" cy="312.0" r="2.05"/><circle cx="662.0" cy="312.0" r="2.05"/><circle cx="465.3" cy="312.0" r="2.05"/><circle cx="478.4" cy="312.0" r="2.05"/><circle cx="491.5" cy="312.0" r="2.05"/><circle cx="504.6" cy="312.0" r="2.05"/><circle cx="517.7" cy="312.0" r="2.05"/><circle cx="557.3" cy="312.0" r="2.05"/><circle cx="570.4" cy="312.0" r="2.05"/><circle cx="583.5" cy="312.0" r="2.05"/><circle cx="596.6" cy="312.0" r="2.05"/><circle cx="609.7" cy="312.0" r="2.05"/><circle cx="413.0" cy="325.1" r="2.05"/><circle cx="426.0" cy="325.1" r="2.05"/><circle cx="649.0" cy="325.1" r="2.05"/><circle cx="662.0" cy="325.1" r="2.05"/><circle cx="465.3" cy="325.1" r="2.05"/><circle cx="478.4" cy="325.1" r="2.05"/><circle cx="491.5" cy="325.1" r="2.05"/><circle cx="504.6" cy="325.1" r="2.05"/><circle cx="517.7" cy="325.1" r="2.05"/><circle cx="557.3" cy="325.1" r="2.05"/><circle cx="570.4" cy="325.1" r="2.05"/><circle cx="583.5" cy="325.1" r="2.05"/><circle cx="596.6" cy="325.1" r="2.05"/><circle cx="609.7" cy="325.1" r="2.05"/><circle cx="413.0" cy="338.2" r="2.05"/><circle cx="426.0" cy="338.2" r="2.05"/><circle cx="649.0" cy="338.2" r="2.05"/><circle cx="662.0" cy="338.2" r="2.05"/><circle cx="465.3" cy="338.2" r="2.05"/><circle cx="478.4" cy="338.2" r="2.05"/><circle cx="491.5" cy="338.2" r="2.05"/><circle cx="504.6" cy="338.2" r="2.05"/><circle cx="517.7" cy="338.2" r="2.05"/><circle cx="557.3" cy="338.2" r="2.05"/><circle cx="570.4" cy="338.2" r="2.05"/><circle cx="583.5" cy="338.2" r="2.05"/><circle cx="596.6" cy="338.2" r="2.05"/><circle cx="609.7" cy="338.2" r="2.05"/><circle cx="413.0" cy="351.3" r="2.05"/><circle cx="426.0" cy="351.3" r="2.05"/><circle cx="649.0" cy="351.3" r="2.05"/><circle cx="662.0" cy="351.3" r="2.05"/><circle cx="465.3" cy="351.3" r="2.05"/><circle cx="478.4" cy="351.3" r="2.05"/><circle cx="491.5" cy="351.3" r="2.05"/><circle cx="504.6" cy="351.3" r="2.05"/><circle cx="517.7" cy="351.3" r="2.05"/><circle cx="557.3" cy="351.3" r="2.05"/><circle cx="570.4" cy="351.3" r="2.05"/><circle cx="583.5" cy="351.3" r="2.05"/><circle cx="596.6" cy="351.3" r="2.05"/><circle cx="609.7" cy="351.3" r="2.05"/><circle cx="413.0" cy="364.4" r="2.05"/><circle cx="426.0" cy="364.4" r="2.05"/><circle cx="649.0" cy="364.4" r="2.05"/><circle cx="662.0" cy="364.4" r="2.05"/><circle cx="465.3" cy="364.4" r="2.05"/><circle cx="478.4" cy="364.4" r="2.05"/><circle cx="491.5" cy="364.4" r="2.05"/><circle cx="504.6" cy="364.4" r="2.05"/><circle cx="517.7" cy="364.4" r="2.05"/><circle cx="557.3" cy="364.4" r="2.05"/><circle cx="570.4" cy="364.4" r="2.05"/><circle cx="583.5" cy="364.4" r="2.05"/><circle cx="596.6" cy="364.4" r="2.05"/><circle cx="609.7" cy="364.4" r="2.05"/><circle cx="413.0" cy="377.5" r="2.05"/><circle cx="426.0" cy="377.5" r="2.05"/><circle cx="649.0" cy="377.5" r="2.05"/><circle cx="662.0" cy="377.5" r="2.05"/><circle cx="465.3" cy="377.5" r="2.05"/><circle cx="478.4" cy="377.5" r="2.05"/><circle cx="491.5" cy="377.5" r="2.05"/><circle cx="504.6" cy="377.5" r="2.05"/><circle cx="517.7" cy="377.5" r="2.05"/><circle cx="557.3" cy="377.5" r="2.05"/><circle cx="570.4" cy="377.5" r="2.05"/><circle cx="583.5" cy="377.5" r="2.05"/><circle cx="596.6" cy="377.5" r="2.05"/><circle cx="609.7" cy="377.5" r="2.05"/><circle cx="413.0" cy="390.7" r="2.05"/><circle cx="426.0" cy="390.7" r="2.05"/><circle cx="649.0" cy="390.7" r="2.05"/><circle cx="662.0" cy="390.7" r="2.05"/><circle cx="465.3" cy="390.7" r="2.05"/><circle cx="478.4" cy="390.7" r="2.05"/><circle cx="491.5" cy="390.7" r="2.05"/><circle cx="504.6" cy="390.7" r="2.05"/><circle cx="517.7" cy="390.7" r="2.05"/><circle cx="557.3" cy="390.7" r="2.05"/><circle cx="570.4" cy="390.7" r="2.05"/><circle cx="583.5" cy="390.7" r="2.05"/><circle cx="596.6" cy="390.7" r="2.05"/><circle cx="609.7" cy="390.7" r="2.05"/><circle cx="413.0" cy="403.8" r="2.05"/><circle cx="426.0" cy="403.8" r="2.05"/><circle cx="649.0" cy="403.8" r="2.05"/><circle cx="662.0" cy="403.8" r="2.05"/><circle cx="465.3" cy="403.8" r="2.05"/><circle cx="478.4" cy="403.8" r="2.05"/><circle cx="491.5" cy="403.8" r="2.05"/><circle cx="504.6" cy="403.8" r="2.05"/><circle cx="517.7" cy="403.8" r="2.05"/><circle cx="557.3" cy="403.8" r="2.05"/><circle cx="570.4" cy="403.8" r="2.05"/><circle cx="583.5" cy="403.8" r="2.05"/><circle cx="596.6" cy="403.8" r="2.05"/><circle cx="609.7" cy="403.8" r="2.05"/><circle cx="413.0" cy="416.9" r="2.05"/><circle cx="426.0" cy="416.9" r="2.05"/><circle cx="649.0" cy="416.9" r="2.05"/><circle cx="662.0" cy="416.9" r="2.05"/><circle cx="465.3" cy="416.9" r="2.05"/><circle cx="478.4" cy="416.9" r="2.05"/><circle cx="491.5" cy="416.9" r="2.05"/><circle cx="504.6" cy="416.9" r="2.05"/><circle cx="517.7" cy="416.9" r="2.05"/><circle cx="557.3" cy="416.9" r="2.05"/><circle cx="570.4" cy="416.9" r="2.05"/><circle cx="583.5" cy="416.9" r="2.05"/><circle cx="596.6" cy="416.9" r="2.05"/><circle cx="609.7" cy="416.9" r="2.05"/><circle cx="413.0" cy="430.0" r="2.05"/><circle cx="426.0" cy="430.0" r="2.05"/><circle cx="649.0" cy="430.0" r="2.05"/><circle cx="662.0" cy="430.0" r="2.05"/><circle cx="465.3" cy="430.0" r="2.05"/><circle cx="478.4" cy="430.0" r="2.05"/><circle cx="491.5" cy="430.0" r="2.05"/><circle cx="504.6" cy="430.0" r="2.05"/><circle cx="517.7" cy="430.0" r="2.05"/><circle cx="557.3" cy="430.0" r="2.05"/><circle cx="570.4" cy="430.0" r="2.05"/><circle cx="583.5" cy="430.0" r="2.05"/><circle cx="596.6" cy="430.0" r="2.05"/><circle cx="609.7" cy="430.0" r="2.05"/><circle cx="413.0" cy="443.1" r="2.05"/><circle cx="426.0" cy="443.1" r="2.05"/><circle cx="649.0" cy="443.1" r="2.05"/><circle cx="662.0" cy="443.1" r="2.05"/><circle cx="465.3" cy="443.1" r="2.05"/><circle cx="478.4" cy="443.1" r="2.05"/><circle cx="491.5" cy="443.1" r="2.05"/><circle cx="504.6" cy="443.1" r="2.05"/><circle cx="517.7" cy="443.1" r="2.05"/><circle cx="557.3" cy="443.1" r="2.05"/><circle cx="570.4" cy="443.1" r="2.05"/><circle cx="583.5" cy="443.1" r="2.05"/><circle cx="596.6" cy="443.1" r="2.05"/><circle cx="609.7" cy="443.1" r="2.05"/><circle cx="413.0" cy="456.2" r="2.05"/><circle cx="426.0" cy="456.2" r="2.05"/><circle cx="649.0" cy="456.2" r="2.05"/><circle cx="662.0" cy="456.2" r="2.05"/><circle cx="465.3" cy="456.2" r="2.05"/><circle cx="478.4" cy="456.2" r="2.05"/><circle cx="491.5" cy="456.2" r="2.05"/><circle cx="504.6" cy="456.2" r="2.05"/><circle cx="517.7" cy="456.2" r="2.05"/><circle cx="557.3" cy="456.2" r="2.05"/><circle cx="570.4" cy="456.2" r="2.05"/><circle cx="583.5" cy="456.2" r="2.05"/><circle cx="596.6" cy="456.2" r="2.05"/><circle cx="609.7" cy="456.2" r="2.05"/><circle cx="413.0" cy="469.3" r="2.05"/><circle cx="426.0" cy="469.3" r="2.05"/><circle cx="649.0" cy="469.3" r="2.05"/><circle cx="662.0" cy="469.3" r="2.05"/><circle cx="465.3" cy="469.3" r="2.05"/><circle cx="478.4" cy="469.3" r="2.05"/><circle cx="491.5" cy="469.3" r="2.05"/><circle cx="504.6" cy="469.3" r="2.05"/><circle cx="517.7" cy="469.3" r="2.05"/><circle cx="557.3" cy="469.3" r="2.05"/><circle cx="570.4" cy="469.3" r="2.05"/><circle cx="583.5" cy="469.3" r="2.05"/><circle cx="596.6" cy="469.3" r="2.05"/><circle cx="609.7" cy="469.3" r="2.05"/><circle cx="413.0" cy="482.4" r="2.05"/><circle cx="426.0" cy="482.4" r="2.05"/><circle cx="649.0" cy="482.4" r="2.05"/><circle cx="662.0" cy="482.4" r="2.05"/><circle cx="465.3" cy="482.4" r="2.05"/><circle cx="478.4" cy="482.4" r="2.05"/><circle cx="491.5" cy="482.4" r="2.05"/><circle cx="504.6" cy="482.4" r="2.05"/><circle cx="517.7" cy="482.4" r="2.05"/><circle cx="557.3" cy="482.4" r="2.05"/><circle cx="570.4" cy="482.4" r="2.05"/><circle cx="583.5" cy="482.4" r="2.05"/><circle cx="596.6" cy="482.4" r="2.05"/><circle cx="609.7" cy="482.4" r="2.05"/></g>
<g font-family="Liberation Sans" font-size="11.5" fill="#505050" text-anchor="middle">
<text x="465.3" y="91.2">a</text><text x="465.3" y="500">a</text>
<text x="478.4" y="91.2">b</text><text x="478.4" y="500">b</text>
<text x="491.5" y="91.2">c</text><text x="491.5" y="500">c</text>
<text x="504.6" y="91.2">d</text><text x="504.6" y="500">d</text>
<text x="517.7" y="91.2">e</text><text x="517.7" y="500">e</text>
<text x="557.3" y="91.2">f</text><text x="557.3" y="500">f</text>
<text x="570.4" y="91.2">g</text><text x="570.4" y="500">g</text>
<text x="583.5" y="91.2">h</text><text x="583.5" y="500">h</text>
<text x="596.6" y="91.2">i</text><text x="596.6" y="500">i</text>
<text x="609.7" y="91.2">j</text><text x="609.7" y="500">j</text>
</g>
<g font-family="Liberation Sans" font-size="9" fill="#4a4a4a">
<text transform="translate(454,105.2) scale(0.82,1)" text-anchor="middle">1</text><text transform="translate(621.5,105.2) scale(0.82,1)" text-anchor="middle">1</text>
<text transform="translate(454,118.3) scale(0.82,1)" text-anchor="middle">2</text><text transform="translate(621.5,118.3) scale(0.82,1)" text-anchor="middle">2</text>
<text transform="translate(454,131.4) scale(0.82,1)" text-anchor="middle">3</text><text transform="translate(621.5,131.4) scale(0.82,1)" text-anchor="middle">3</text>
<text transform="translate(454,144.5) scale(0.82,1)" text-anchor="middle">4</text><text transform="translate(621.5,144.5) scale(0.82,1)" text-anchor="middle">4</text>
<text transform="translate(454,157.6) scale(0.82,1)" text-anchor="middle">5</text><text transform="translate(621.5,157.6) scale(0.82,1)" text-anchor="middle">5</text>
<text transform="translate(454,170.7) scale(0.82,1)" text-anchor="middle">6</text><text transform="translate(621.5,170.7) scale(0.82,1)" text-anchor="middle">6</text>
<text transform="translate(454,183.8) scale(0.82,1)" text-anchor="middle">7</text><text transform="translate(621.5,183.8) scale(0.82,1)" text-anchor="middle">7</text>
<text transform="translate(454,196.9) scale(0.82,1)" text-anchor="middle">8</text><text transform="translate(621.5,196.9) scale(0.82,1)" text-anchor="middle">8</text>
<text transform="translate(454,210.1) scale(0.82,1)" text-anchor="middle">9</text><text transform="translate(621.5,210.1) scale(0.82,1)" text-anchor="middle">9</text>
<text transform="translate(454,223.2) scale(0.82,1)" text-anchor="middle">10</text><text transform="translate(621.5,223.2) scale(0.82,1)" text-anchor="middle">10</text>
<text transform="translate(454,236.3) scale(0.82,1)" text-anchor="middle">11</text><text transform="translate(621.5,236.3) scale(0.82,1)" text-anchor="middle">11</text>
<text transform="translate(454,249.4) scale(0.82,1)" text-anchor="middle">12</text><text transform="translate(621.5,249.4) scale(0.82,1)" text-anchor="middle">12</text>
<text transform="translate(454,262.5) scale(0.82,1)" text-anchor="middle">13</text><text transform="translate(621.5,262.5) scale(0.82,1)" text-anchor="middle">13</text>
<text transform="translate(454,275.6) scale(0.82,1)" text-anchor="middle">14</text><text transform="translate(621.5,275.6) scale(0.82,1)" text-anchor="middle">14</text>
<text transform="translate(454,288.7) scale(0.82,1)" text-anchor="middle">15</text><text transform="translate(621.5,288.7) scale(0.82,1)" text-anchor="middle">15</text>
<text transform="translate(454,301.8) scale(0.82,1)" text-anchor="middle">16</text><text transform="translate(621.5,301.8) scale(0.82,1)" text-anchor="middle">16</text>
<text transform="translate(454,314.9) scale(0.82,1)" text-anchor="middle">17</text><text transform="translate(621.5,314.9) scale(0.82,1)" text-anchor="middle">17</text>
<text transform="translate(454,328.0) scale(0.82,1)" text-anchor="middle">18</text><text transform="translate(621.5,328.0) scale(0.82,1)" text-anchor="middle">18</text>
<text transform="translate(454,341.1) scale(0.82,1)" text-anchor="middle">19</text><text transform="translate(621.5,341.1) scale(0.82,1)" text-anchor="middle">19</text>
<text transform="translate(454,354.2) scale(0.82,1)" text-anchor="middle">20</text><text transform="translate(621.5,354.2) scale(0.82,1)" text-anchor="middle">20</text>
<text transform="translate(454,367.3) scale(0.82,1)" text-anchor="middle">21</text><text transform="translate(621.5,367.3) scale(0.82,1)" text-anchor="middle">21</text>
<text transform="translate(454,380.4) scale(0.82,1)" text-anchor="middle">22</text><text transform="translate(621.5,380.4) scale(0.82,1)" text-anchor="middle">22</text>
<text transform="translate(454,393.6) scale(0.82,1)" text-anchor="middle">23</text><text transform="translate(621.5,393.6) scale(0.82,1)" text-anchor="middle">23</text>
<text transform="translate(454,406.7) scale(0.82,1)" text-anchor="middle">24</text><text transform="translate(621.5,406.7) scale(0.82,1)" text-anchor="middle">24</text>
<text transform="translate(454,419.8) scale(0.82,1)" text-anchor="middle">25</text><text transform="translate(621.5,419.8) scale(0.82,1)" text-anchor="middle">25</text>
<text transform="translate(454,432.9) scale(0.82,1)" text-anchor="middle">26</text><text transform="translate(621.5,432.9) scale(0.82,1)" text-anchor="middle">26</text>
<text transform="translate(454,446.0) scale(0.82,1)" text-anchor="middle">27</text><text transform="translate(621.5,446.0) scale(0.82,1)" text-anchor="middle">27</text>
<text transform="translate(454,459.1) scale(0.82,1)" text-anchor="middle">28</text><text transform="translate(621.5,459.1) scale(0.82,1)" text-anchor="middle">28</text>
<text transform="translate(454,472.2) scale(0.82,1)" text-anchor="middle">29</text><text transform="translate(621.5,472.2) scale(0.82,1)" text-anchor="middle">29</text>
<text transform="translate(454,485.3) scale(0.82,1)" text-anchor="middle">30</text><text transform="translate(621.5,485.3) scale(0.82,1)" text-anchor="middle">30</text>
</g>
<path d="M74.5 170 H344 Q347 170 347 173 V502.7 L339.3 510.6 H280 L266.5 524 H97.6 L84.7 511 H75 Q71.4 511 71.4 507 V173 Q71.4 170 74.5 170 Z" fill="#2d6b9b"/>
<ellipse cx="222" cy="187" rx="6" ry="7.5" fill="#e6e6e6"/><ellipse cx="288" cy="187" rx="7" ry="7.5" fill="#e6e6e6"/>
<rect x="223" y="137" width="64.5" height="85.5" rx="1.5" fill="#dedede"/>
<rect x="223" y="137" width="2.5" height="85.5" fill="#b9b9b9"/>
<path d="M246 219 H266" stroke="#aaa" stroke-width="1"/>
<rect x="235" y="66" width="43" height="63" rx="1.5" fill="#c9c9c9"/>
<rect x="244" y="66" width="10" height="63" fill="#c2c2c2"/><rect x="259" y="66" width="9" height="63" fill="#cdcdcd"/>
<path d="M256.5 66 V93 H258.5 V98 H256.5 V129" fill="none" stroke="#a8a8a8" stroke-width="0.8"/>
<rect x="223" y="45" width="67" height="23" rx="1.5" fill="#2e2e2e"/>
<rect x="236" y="45" width="41" height="10" fill="#262626"/>
<rect x="302.3" y="186.5" width="35" height="34.5" rx="2.5" fill="#24587e"/>
<g fill="#e9e9e9" stroke="#c9c9c9" stroke-width="0.5"><rect x="305.5" y="182.6" width="8" height="3.6" rx="1.5"/><rect x="316.5" y="182.6" width="8" height="3.6" rx="1.5"/><rect x="327" y="182.6" width="8" height="3.6" rx="1.5"/><rect x="305.5" y="219.4" width="8" height="3.6" rx="1.5"/><rect x="326" y="219.4" width="8" height="3.6" rx="1.5"/></g>
<rect x="303.8" y="185.4" width="34.2" height="34.6" rx="2.5" fill="#dfdfdf"/>
<circle cx="319.8" cy="203.4" r="9.1" fill="#9c9c9c"/><circle cx="320.8" cy="203" r="9" fill="#a3462b"/>
<rect x="78" y="171" width="15" height="57" rx="2" fill="#22506f"/>
<rect x="79.5" y="156" width="53.5" height="17" rx="2" fill="#333"/>
<rect x="79.5" y="156" width="6" height="17" fill="#b5b5b5"/>
<rect x="85.5" y="170" width="44.5" height="58" rx="2" fill="#262626"/>
<path d="M93 228 V186 Q93 173 106 173 H130 V228 Z" fill="#3c3c3c"/>
<path d="M88 220.5 H130" stroke="#555" stroke-width="1"/>
<rect x="149.3" y="189.5" width="18.5" height="9" rx="1.8" fill="#c9c9c9" stroke="#a0a0a0" stroke-width="0.7"/><rect x="151" y="192" width="15" height="6" rx="1" fill="#e4e4e4"/>
<rect x="141" y="197.5" width="35" height="17" rx="1" fill="#3a3a3a"/>
<g fill="#d6d6d6" stroke="#b0b0b0" stroke-width="0.5"><rect x="146.2" y="214.5" width="4.4" height="10" rx="0.8"/><rect x="155.6" y="214.5" width="4.4" height="10" rx="0.8"/><rect x="165.3" y="214.5" width="4.4" height="10" rx="0.8"/></g>
<circle cx="84" cy="242" r="8" fill="#f3f4f6" stroke="#8c7d45" stroke-width="1"/>
<circle cx="333.6" cy="248.6" r="8" fill="#f3f4f6" stroke="#8c7d45" stroke-width="1"/>
<circle cx="110.2" cy="511.9" r="8" fill="#f3f4f6" stroke="#8c7d45" stroke-width="1"/>
<circle cx="254.8" cy="511.8" r="8" fill="#f3f4f6" stroke="#8c7d45" stroke-width="1"/>
<circle cx="108.6" cy="256.9" r="16" fill="#24567c"/>
<circle cx="114.6" cy="256.9" r="16.3" fill="#c9c9c9"/>
<circle cx="114.6" cy="256.9" r="13.6" fill="#e4e4e4"/>
<path d="M110 244.10 A13.6 13.6 0 0 0 110 269.70 Z" fill="#3a3a3a"/>
<circle cx="108.6" cy="295.5" r="16" fill="#24567c"/>
<circle cx="114.6" cy="295.5" r="16.3" fill="#c9c9c9"/>
<circle cx="114.6" cy="295.5" r="13.6" fill="#e4e4e4"/>
<path d="M110 282.70 A13.6 13.6 0 0 0 110 308.30 Z" fill="#3a3a3a"/>
<rect x="193" y="234" width="24.5" height="62.5" rx="12" fill="#bdbdbd" stroke="#b0b0b0" stroke-width="0.8"/>
<rect x="195.5" y="236.3" width="19.5" height="58" rx="9.7" fill="#dcdcdc"/><text transform="translate(202,247) rotate(90) scale(0.6,1)" font-family="Liberation Sans" font-size="11" fill="#cbcbcb">SPK16.000G</text>
<rect x="165" y="258.7" width="17" height="16.5" rx="1" fill="#383838"/>
<rect x="137.9" y="278.5" width="16.4" height="7.3" rx="0.5" fill="#383838"/>
<g fill="#d4d4d4"><rect x="140.2" y="274.2" width="2.6" height="4.3"/><rect x="144.8" y="274.2" width="2.6" height="4.3"/><rect x="149.2" y="274.2" width="2.6" height="4.3"/><rect x="140.2" y="285.8" width="2.6" height="4.5"/><rect x="149.2" y="285.8" width="2.6" height="4.5"/></g>
<rect x="234" y="256.7" width="28.7" height="27.3" rx="1" fill="#383838"/>
<rect x="243.5" y="306.5" width="6" height="16" fill="#bdbdbd"/><rect x="243.5" y="311" width="6" height="7" fill="#e2e2e2"/>
<rect x="256" y="306.5" width="6" height="16" fill="#bdbdbd"/><rect x="256" y="311" width="6" height="7" fill="#e2e2e2"/>
<rect x="280.5" y="306.5" width="6" height="16" fill="#bdbdbd"/><rect x="280.5" y="311" width="6" height="7" fill="#e2e2e2"/>
<rect x="255.7" y="470.8" width="6.5" height="17" fill="#bdbdbd"/><rect x="255.7" y="474" width="6.5" height="7" fill="#e2e2e2"/>
<rect x="129.3" y="312.7" width="47.7" height="193" rx="1" fill="#262626"/>
<rect x="134" y="314" width="37.4" height="191" rx="2" fill="#3b3b3b"/>
<g fill="#dcdcdc"><rect x="131.6" y="317.7" width="2.9" height="9.6" rx="1.2"/><rect x="172.1" y="317.7" width="2.9" height="9.6" rx="1.2"/><rect x="131.6" y="331.0" width="2.9" height="9.6" rx="1.2"/><rect x="172.1" y="331.0" width="2.9" height="9.6" rx="1.2"/><rect x="131.6" y="344.3" width="2.9" height="9.6" rx="1.2"/><rect x="172.1" y="344.3" width="2.9" height="9.6" rx="1.2"/><rect x="131.6" y="357.6" width="2.9" height="9.6" rx="1.2"/><rect x="172.1" y="357.6" width="2.9" height="9.6" rx="1.2"/><rect x="131.6" y="370.9" width="2.9" height="9.6" rx="1.2"/><rect x="172.1" y="370.9" width="2.9" height="9.6" rx="1.2"/><rect x="131.6" y="384.2" width="2.9" height="9.6" rx="1.2"/><rect x="172.1" y="384.2" width="2.9" height="9.6" rx="1.2"/><rect x="131.6" y="397.5" width="2.9" height="9.6" rx="1.2"/><rect x="172.1" y="397.5" width="2.9" height="9.6" rx="1.2"/><rect x="131.6" y="410.8" width="2.9" height="9.6" rx="1.2"/><rect x="172.1" y="410.8" width="2.9" height="9.6" rx="1.2"/><rect x="131.6" y="424.1" width="2.9" height="9.6" rx="1.2"/><rect x="172.1" y="424.1" width="2.9" height="9.6" rx="1.2"/><rect x="131.6" y="437.4" width="2.9" height="9.6" rx="1.2"/><rect x="172.1" y="437.4" width="2.9" height="9.6" rx="1.2"/><rect x="131.6" y="450.7" width="2.9" height="9.6" rx="1.2"/><rect x="172.1" y="450.7" width="2.9" height="9.6" rx="1.2"/><rect x="131.6" y="464.0" width="2.9" height="9.6" rx="1.2"/><rect x="172.1" y="464.0" width="2.9" height="9.6" rx="1.2"/><rect x="131.6" y="477.3" width="2.9" height="9.6" rx="1.2"/><rect x="172.1" y="477.3" width="2.9" height="9.6" rx="1.2"/><rect x="131.6" y="490.6" width="2.9" height="9.6" rx="1.2"/><rect x="172.1" y="490.6" width="2.9" height="9.6" rx="1.2"/></g>
<circle cx="153.6" cy="340.5" r="5" fill="#2a2a2a"/><circle cx="153.5" cy="478.3" r="5" fill="#2a2a2a"/>
<rect x="327.4" y="259.8" width="13" height="132.0" rx="0.8" fill="#2d2d2d"/><rect x="328.9" y="262.3" width="9.8" height="9.3" fill="#242424"/><path d="M328.9 262.3 L332.4 264.6 V269.5 L328.9 271.6 Z" fill="#676767"/><path d="M328.9 271.6 L332.4 269.5 H337.7 L338.7 271.6 Z" fill="#505050"/><rect x="332.4" y="264.6" width="5.3" height="4.9" fill="#111"/><rect x="328.9" y="275.5" width="9.8" height="9.3" fill="#242424"/><path d="M328.9 275.5 L332.4 277.8 V282.7 L328.9 284.8 Z" fill="#676767"/><path d="M328.9 284.8 L332.4 282.7 H337.7 L338.7 284.8 Z" fill="#505050"/><rect x="332.4" y="277.8" width="5.3" height="4.9" fill="#111"/><rect x="328.9" y="288.7" width="9.8" height="9.3" fill="#242424"/><path d="M328.9 288.7 L332.4 291.0 V295.9 L328.9 298.0 Z" fill="#676767"/><path d="M328.9 298.0 L332.4 295.9 H337.7 L338.7 298.0 Z" fill="#505050"/><rect x="332.4" y="291.0" width="5.3" height="4.9" fill="#111"/><rect x="328.9" y="301.9" width="9.8" height="9.3" fill="#242424"/><path d="M328.9 301.9 L332.4 304.2 V309.1 L328.9 311.2 Z" fill="#676767"/><path d="M328.9 311.2 L332.4 309.1 H337.7 L338.7 311.2 Z" fill="#505050"/><rect x="332.4" y="304.2" width="5.3" height="4.9" fill="#111"/><rect x="328.9" y="315.1" width="9.8" height="9.3" fill="#242424"/><path d="M328.9 315.1 L332.4 317.4 V322.3 L328.9 324.4 Z" fill="#676767"/><path d="M328.9 324.4 L332.4 322.3 H337.7 L338.7 324.4 Z" fill="#505050"/><rect x="332.4" y="317.4" width="5.3" height="4.9" fill="#111"/><rect x="328.9" y="328.3" width="9.8" height="9.3" fill="#242424"/><path d="M328.9 328.3 L332.4 330.6 V335.5 L328.9 337.6 Z" fill="#676767"/><path d="M328.9 337.6 L332.4 335.5 H337.7 L338.7 337.6 Z" fill="#505050"/><rect x="332.4" y="330.6" width="5.3" height="4.9" fill="#111"/><rect x="328.9" y="341.5" width="9.8" height="9.3" fill="#242424"/><path d="M328.9 341.5 L332.4 343.8 V348.7 L328.9 350.8 Z" fill="#676767"/><path d="M328.9 350.8 L332.4 348.7 H337.7 L338.7 350.8 Z" fill="#505050"/><rect x="332.4" y="343.8" width="5.3" height="4.9" fill="#111"/><rect x="328.9" y="354.7" width="9.8" height="9.3" fill="#242424"/><path d="M328.9 354.7 L332.4 357.0 V361.9 L328.9 364.0 Z" fill="#676767"/><path d="M328.9 364.0 L332.4 361.9 H337.7 L338.7 364.0 Z" fill="#505050"/><rect x="332.4" y="357.0" width="5.3" height="4.9" fill="#111"/><rect x="328.9" y="367.9" width="9.8" height="9.3" fill="#242424"/><path d="M328.9 367.9 L332.4 370.2 V375.1 L328.9 377.2 Z" fill="#676767"/><path d="M328.9 377.2 L332.4 375.1 H337.7 L338.7 377.2 Z" fill="#505050"/><rect x="332.4" y="370.2" width="5.3" height="4.9" fill="#111"/><rect x="328.9" y="381.1" width="9.8" height="9.3" fill="#242424"/><path d="M328.9 381.1 L332.4 383.4 V388.3 L328.9 390.4 Z" fill="#676767"/><path d="M328.9 390.4 L332.4 388.3 H337.7 L338.7 390.4 Z" fill="#505050"/><rect x="332.4" y="383.4" width="5.3" height="4.9" fill="#111"/>
<rect x="327.4" y="398.8" width="13" height="106.6" rx="0.8" fill="#2d2d2d"/><rect x="328.9" y="401.3" width="9.8" height="9.3" fill="#242424"/><path d="M328.9 401.3 L332.4 403.6 V408.5 L328.9 410.6 Z" fill="#676767"/><path d="M328.9 410.6 L332.4 408.5 H337.7 L338.7 410.6 Z" fill="#505050"/><rect x="332.4" y="403.6" width="5.3" height="4.9" fill="#111"/><rect x="328.9" y="414.6" width="9.8" height="9.3" fill="#242424"/><path d="M328.9 414.6 L332.4 416.9 V421.8 L328.9 423.9 Z" fill="#676767"/><path d="M328.9 423.9 L332.4 421.8 H337.7 L338.7 423.9 Z" fill="#505050"/><rect x="332.4" y="416.9" width="5.3" height="4.9" fill="#111"/><rect x="328.9" y="428.0" width="9.8" height="9.3" fill="#242424"/><path d="M328.9 428.0 L332.4 430.3 V435.2 L328.9 437.3 Z" fill="#676767"/><path d="M328.9 437.3 L332.4 435.2 H337.7 L338.7 437.3 Z" fill="#505050"/><rect x="332.4" y="430.3" width="5.3" height="4.9" fill="#111"/><rect x="328.9" y="441.3" width="9.8" height="9.3" fill="#242424"/><path d="M328.9 441.3 L332.4 443.6 V448.5 L328.9 450.6 Z" fill="#676767"/><path d="M328.9 450.6 L332.4 448.5 H337.7 L338.7 450.6 Z" fill="#505050"/><rect x="332.4" y="443.6" width="5.3" height="4.9" fill="#111"/><rect x="328.9" y="454.6" width="9.8" height="9.3" fill="#242424"/><path d="M328.9 454.6 L332.4 456.9 V461.8 L328.9 463.9 Z" fill="#676767"/><path d="M328.9 463.9 L332.4 461.8 H337.7 L338.7 463.9 Z" fill="#505050"/><rect x="332.4" y="456.9" width="5.3" height="4.9" fill="#111"/><rect x="328.9" y="468.0" width="9.8" height="9.3" fill="#242424"/><path d="M328.9 468.0 L332.4 470.3 V475.2 L328.9 477.3 Z" fill="#676767"/><path d="M328.9 477.3 L332.4 475.2 H337.7 L338.7 477.3 Z" fill="#505050"/><rect x="332.4" y="470.3" width="5.3" height="4.9" fill="#111"/><rect x="328.9" y="481.3" width="9.8" height="9.3" fill="#242424"/><path d="M328.9 481.3 L332.4 483.6 V488.5 L328.9 490.6 Z" fill="#676767"/><path d="M328.9 490.6 L332.4 488.5 H337.7 L338.7 490.6 Z" fill="#505050"/><rect x="332.4" y="483.6" width="5.3" height="4.9" fill="#111"/><rect x="328.9" y="494.6" width="9.8" height="9.3" fill="#242424"/><path d="M328.9 494.6 L332.4 496.9 V501.8 L328.9 503.9 Z" fill="#676767"/><path d="M328.9 503.9 L332.4 501.8 H337.7 L338.7 503.9 Z" fill="#505050"/><rect x="332.4" y="496.9" width="5.3" height="4.9" fill="#111"/>
<rect x="78" y="307.2" width="13" height="106.2" rx="0.8" fill="#2d2d2d"/><rect x="79.5" y="309.7" width="9.8" height="9.3" fill="#242424"/><path d="M79.5 309.7 L83.0 312.0 V316.9 L79.5 319.0 Z" fill="#676767"/><path d="M79.5 319.0 L83.0 316.9 H88.3 L89.3 319.0 Z" fill="#505050"/><rect x="83.0" y="312.0" width="5.3" height="4.9" fill="#111"/><rect x="79.5" y="323.0" width="9.8" height="9.3" fill="#242424"/><path d="M79.5 323.0 L83.0 325.3 V330.2 L79.5 332.3 Z" fill="#676767"/><path d="M79.5 332.3 L83.0 330.2 H88.3 L89.3 332.3 Z" fill="#505050"/><rect x="83.0" y="325.3" width="5.3" height="4.9" fill="#111"/><rect x="79.5" y="336.2" width="9.8" height="9.3" fill="#242424"/><path d="M79.5 336.2 L83.0 338.5 V343.4 L79.5 345.5 Z" fill="#676767"/><path d="M79.5 345.5 L83.0 343.4 H88.3 L89.3 345.5 Z" fill="#505050"/><rect x="83.0" y="338.5" width="5.3" height="4.9" fill="#111"/><rect x="79.5" y="349.5" width="9.8" height="9.3" fill="#242424"/><path d="M79.5 349.5 L83.0 351.8 V356.7 L79.5 358.8 Z" fill="#676767"/><path d="M79.5 358.8 L83.0 356.7 H88.3 L89.3 358.8 Z" fill="#505050"/><rect x="83.0" y="351.8" width="5.3" height="4.9" fill="#111"/><rect x="79.5" y="362.8" width="9.8" height="9.3" fill="#242424"/><path d="M79.5 362.8 L83.0 365.1 V370.0 L79.5 372.1 Z" fill="#676767"/><path d="M79.5 372.1 L83.0 370.0 H88.3 L89.3 372.1 Z" fill="#505050"/><rect x="83.0" y="365.1" width="5.3" height="4.9" fill="#111"/><rect x="79.5" y="376.0" width="9.8" height="9.3" fill="#242424"/><path d="M79.5 376.0 L83.0 378.3 V383.2 L79.5 385.3 Z" fill="#676767"/><path d="M79.5 385.3 L83.0 383.2 H88.3 L89.3 385.3 Z" fill="#505050"/><rect x="83.0" y="378.3" width="5.3" height="4.9" fill="#111"/><rect x="79.5" y="389.3" width="9.8" height="9.3" fill="#242424"/><path d="M79.5 389.3 L83.0 391.6 V396.5 L79.5 398.6 Z" fill="#676767"/><path d="M79.5 398.6 L83.0 396.5 H88.3 L89.3 398.6 Z" fill="#505050"/><rect x="83.0" y="391.6" width="5.3" height="4.9" fill="#111"/><rect x="79.5" y="402.6" width="9.8" height="9.3" fill="#242424"/><path d="M79.5 402.6 L83.0 404.9 V409.8 L79.5 411.9 Z" fill="#676767"/><path d="M79.5 411.9 L83.0 409.8 H88.3 L89.3 411.9 Z" fill="#505050"/><rect x="83.0" y="404.9" width="5.3" height="4.9" fill="#111"/>
<rect x="78" y="425.3" width="13" height="80.2" rx="0.8" fill="#2d2d2d"/><rect x="79.5" y="427.8" width="9.8" height="9.3" fill="#242424"/><path d="M79.5 427.8 L83.0 430.1 V435.0 L79.5 437.1 Z" fill="#676767"/><path d="M79.5 437.1 L83.0 435.0 H88.3 L89.3 437.1 Z" fill="#505050"/><rect x="83.0" y="430.1" width="5.3" height="4.9" fill="#111"/><rect x="79.5" y="441.2" width="9.8" height="9.3" fill="#242424"/><path d="M79.5 441.2 L83.0 443.5 V448.4 L79.5 450.5 Z" fill="#676767"/><path d="M79.5 450.5 L83.0 448.4 H88.3 L89.3 450.5 Z" fill="#505050"/><rect x="83.0" y="443.5" width="5.3" height="4.9" fill="#111"/><rect x="79.5" y="454.5" width="9.8" height="9.3" fill="#242424"/><path d="M79.5 454.5 L83.0 456.8 V461.7 L79.5 463.8 Z" fill="#676767"/><path d="M79.5 463.8 L83.0 461.7 H88.3 L89.3 463.8 Z" fill="#505050"/><rect x="83.0" y="456.8" width="5.3" height="4.9" fill="#111"/><rect x="79.5" y="467.9" width="9.8" height="9.3" fill="#242424"/><path d="M79.5 467.9 L83.0 470.2 V475.1 L79.5 477.2 Z" fill="#676767"/><path d="M79.5 477.2 L83.0 475.1 H88.3 L89.3 477.2 Z" fill="#505050"/><rect x="83.0" y="470.2" width="5.3" height="4.9" fill="#111"/><rect x="79.5" y="481.3" width="9.8" height="9.3" fill="#242424"/><path d="M79.5 481.3 L83.0 483.6 V488.5 L79.5 490.6 Z" fill="#676767"/><path d="M79.5 490.6 L83.0 488.5 H88.3 L89.3 490.6 Z" fill="#505050"/><rect x="83.0" y="483.6" width="5.3" height="4.9" fill="#111"/><rect x="79.5" y="494.6" width="9.8" height="9.3" fill="#242424"/><path d="M79.5 494.6 L83.0 496.9 V501.8 L79.5 503.9 Z" fill="#676767"/><path d="M79.5 503.9 L83.0 501.8 H88.3 L89.3 503.9 Z" fill="#505050"/><rect x="83.0" y="496.9" width="5.3" height="4.9" fill="#111"/>
<path d="M272.5 364.5 C279.0 371.0 284.3 355.2 284.3 349.3 C284.3 342.7 279.1 337.5 272.5 337.5 C265.9 337.5 260.7 342.7 260.7 349.3 C260.7 355.2 266.0 371.0 272.5 364.5 M272.5 364.5 C279.0 358.0 284.3 373.8 284.3 379.7 C284.3 386.3 279.1 391.5 272.5 391.5 C265.9 391.5 260.7 386.3 260.7 379.7 C260.7 373.8 266.0 358.0 272.5 364.5 " fill="none" stroke="#e6e6e6" stroke-width="4.8"/>
<rect x="270.8" y="345.8" width="3.2" height="7.8" fill="#e6e6e6"/>
<path d="M268 379 H277 M272.5 374.5 V383.5" stroke="#e6e6e6" stroke-width="3"/>
<rect x="258.5" y="403.7" width="26.5" height="59.3" rx="13.2" fill="none" stroke="#dcdcdc" stroke-width="1" stroke-dasharray="1 1"/>
<text transform="translate(263.8,411.5) rotate(90)" font-family="Liberation Sans" font-size="21.5" fill="#ececec" stroke="#2d6b9b" stroke-width="0.7" letter-spacing="0.3">UNO</text>
<path d="M125.7 345.8 V409.4 M125.7 425.3 V499 M293.8 315 V501.7" stroke="#c9d6e0" stroke-width="1.2"/>
<text transform="translate(245.2,336.5) rotate(90)" font-family="Liberation Mono" font-weight="bold" font-size="12.5" fill="#eee" letter-spacing="0.7">ARDUINO</text>
<text transform="translate(115,374) rotate(90)" font-family="Liberation Sans" font-weight="bold" font-size="10" fill="#eee">POWER</text>
<text transform="translate(115,444.5) rotate(90)" font-family="Liberation Sans" font-weight="bold" font-size="10" fill="#eee" letter-spacing="0.25">ANALOG IN</text>
<text transform="translate(297.6,388) rotate(90)" font-family="Liberation Sans" font-weight="bold" font-size="10" fill="#eee" letter-spacing="0.55">DIGITAL (PWM~)</text>
<text transform="translate(259,489) rotate(90)" font-family="Liberation Sans" font-weight="bold" font-size="7" fill="#eee">ON</text>
<text transform="translate(243,292) rotate(90)" font-family="Liberation Sans" font-size="7.5" fill="#eee">RX</text>
<text transform="translate(255.8,292) rotate(90)" font-family="Liberation Sans" font-size="7.5" fill="#eee">TX</text>
<text transform="translate(281,298) rotate(90)" font-family="Liberation Sans" font-size="7.5" fill="#eee">L</text>
<g font-family="Liberation Sans" font-size="8.3" fill="#f4f4f4" transform="translate(95,0) scale(0.9,1)">
<text x="0" y="330.9">IOREF</text>
<text x="0" y="344.0">RESET</text>
<text x="0" y="357.1">3.3V</text>
<text x="0" y="370.2">5V</text>
<text x="0" y="383.3">GND</text>
<text x="0" y="396.4">GND</text>
<text x="0" y="409.5">Vin</text>
</g>
<g font-family="Liberation Mono" font-weight="bold" font-size="10" fill="#eee">
<text x="94.5" y="436.0">A0</text>
<text x="94.5" y="449.2">A1</text>
<text x="94.5" y="462.4">A2</text>
<text x="94.5" y="475.6">A3</text>
<text x="94.5" y="488.8">A4</text>
<text x="94.5" y="502.0">A5</text>
</g>
<g font-family="Liberation Sans" font-size="9.5" fill="#eee" text-anchor="end">
<text x="321.2" y="297.0">AREF</text>
<text x="321.2" y="310.1">GND</text>
<text x="321.2" y="323.3">13</text>
<text x="321.2" y="336.4">12</text>
<text x="321.2" y="349.6">~11</text>
<text x="321.2" y="362.8">~10</text>
<text x="321.2" y="375.9">~9</text>
<text x="321.2" y="389.1">8</text>
<text x="321.2" y="409.9">7</text>
<text x="321.2" y="423.0">~6</text>
<text x="321.2" y="436.1">~5</text>
<text x="321.2" y="449.3">4</text>
<text x="321.2" y="462.4">~3</text>
<text x="321.2" y="475.5">2</text>
</g>
<g font-family="Liberation Mono" font-weight="bold" font-size="10" fill="#eee">
<text x="296.5" y="488.5" letter-spacing="0.3">TX</text><text x="315.5" y="488.5">1</text>
<text x="296.5" y="501.6" letter-spacing="0.3">RX</text><text x="315.5" y="501.6">0</text>
</g>
<path d="M310.3 485.2 H314.2 M312.3 483 L314.6 485.2 L312.3 487.4" fill="none" stroke="#eee" stroke-width="1.4"/>
<path d="M315.2 498.3 H311.3 M313.2 496.1 L310.9 498.3 L313.2 500.5" fill="none" stroke="#eee" stroke-width="1.4"/>
<path d="M85.5 366.9 H32.5 Q19.7 366.9 19.7 379.7 V549 Q19.7 561.8 32.5 561.8 H399 Q411.8 561.8 411.8 549 V482" fill="none" stroke="#e81e25" stroke-width="3.3" stroke-linecap="round"/>
<path d="M85.5 380 H49 Q37 380 37 392 V535.8 Q37 547.8 49 547.8 L413.3 553 Q425.3 553 425.3 541 V482" fill="none" stroke="#383b3e" stroke-width="3.3" stroke-linecap="round"/>
<path d="M333.5 472 H470 Q479 472 479 463 V457.5" fill="none" stroke="#d2308e" stroke-width="3" stroke-linecap="round"/>
<path d="M412 430.2 H478.5" stroke="#e81e25" stroke-width="3" stroke-linecap="round"/>
<path d="M333.5 320 L350.4 281.5" fill="none" stroke="#ff8800" stroke-width="3" stroke-linecap="round"/>
<path d="M398 281.4 H425" stroke="#ff8800" stroke-width="3"/>
<path d="M438.5 259 Q438.5 270 436.3 276" fill="none" stroke="#ff8800" stroke-width="3"/>
<path d="M333 333 L347.5 335.5" fill="none" stroke="#ffd400" stroke-width="3" stroke-linecap="round"/><path d="M402 335.5 H423 Q438.8 335.5 438.8 320 V309" fill="none" stroke="#ffd400" stroke-width="3"/>
<path d="M349.6 281 H404" stroke="#8c8c8c" stroke-width="2.2"/><path d="M358.1 281 L363.6 275.20000000000005 Q364.6 274.6 366.1 274.6 H367.1 Q369.1 274.6 370.6 276.7 H383.0 Q384.5 274.6 386.5 274.6 H387.5 Q389.0 274.6 390.0 275.20000000000005 L395.5 281 L390.0 286.79999999999995 Q389.0 287.4 387.5 287.4 H386.5 Q384.5 287.4 383.0 285.3 H370.6 Q369.1 287.4 367.1 287.4 H366.1 Q364.6 287.4 363.6 286.79999999999995 L358.1 281 Z" fill="#dcb47a"/><rect x="363.9" y="274.8" width="3.5" height="12.5" fill="#ff8c00"/><rect x="371.0" y="276.5" width="3" height="9" fill="#ff8c00"/><rect x="377.7" y="276.5" width="3" height="9" fill="#8b4513"/><rect x="387.8" y="275.5" width="1.5" height="11" fill="#b8a020"/>
<path d="M347 335.8 H402" stroke="#8c8c8c" stroke-width="2.2"/><path d="M355.5 335.8 L361.0 330.00000000000006 Q362.0 329.40000000000003 363.5 329.40000000000003 H364.5 Q366.5 329.40000000000003 368.0 331.5 H381.0 Q382.5 329.40000000000003 384.5 329.40000000000003 H385.5 Q387.0 329.40000000000003 388.0 330.00000000000006 L393.5 335.8 L388.0 341.59999999999997 Q387.0 342.2 385.5 342.2 H384.5 Q382.5 342.2 381.0 340.1 H368.0 Q366.5 342.2 364.5 342.2 H363.5 Q362.0 342.2 361.0 341.59999999999997 L355.5 335.8 Z" fill="#dcb47a"/><rect x="361.2" y="329.6" width="3.5" height="12.5" fill="#ff8c00"/><rect x="369.0" y="331.3" width="3" height="9" fill="#ff8c00"/><rect x="375.2" y="331.1" width="3.5" height="9.5" fill="#8b4513"/><rect x="385.8" y="330.3" width="1.5" height="11" fill="#b8a020"/>
<path d="M425.4 456.4 H481" stroke="#8c8c8c" stroke-width="2.2"/><path d="M433.9 456.4 L439.4 450.6 Q440.4 450.0 441.9 450.0 H442.9 Q444.9 450.0 446.4 452.09999999999997 H460.0 Q461.5 450.0 463.5 450.0 H464.5 Q466.0 450.0 467.0 450.6 L472.5 456.4 L467.0 462.19999999999993 Q466.0 462.79999999999995 464.5 462.79999999999995 H463.5 Q461.5 462.79999999999995 460.0 460.7 H446.4 Q444.9 462.79999999999995 442.9 462.79999999999995 H441.9 Q440.4 462.79999999999995 439.4 462.19999999999993 L433.9 456.4 Z" fill="#dcb47a"/><rect x="439.4" y="450.1" width="3.5" height="12.5" fill="#8b4513"/><rect x="446.1" y="451.9" width="3" height="9" fill="#111"/><rect x="453.0" y="451.9" width="3" height="9" fill="#ff1a1a"/><rect x="463.1" y="450.9" width="1.5" height="11" fill="#c8b030"/>
<path d="M426 249.3 V259.584" stroke="#8f8f8f" stroke-width="2.2"/><circle cx="426" cy="259.584" r="2" fill="#6a6a6a" stroke="#9a9a9a" stroke-width="0.8"/><path d="M435.8 249.3 L439.3 254.8 V258.3" fill="none" stroke="#8f8f8f" stroke-width="2.2" stroke-linejoin="round"/><path d="M421.9 246.3 V231.3 Q421.9 222.3 431 222.3 Q440.1 222.3 440.1 231.3 V242.8 Q441.8 244.3 441.8 246.8 Q441.8 251.3 431.5 251.3 Q421.9 251.3 421.9 246.3 Z" fill="#1f7d2b"/><path d="M422.3 246.5 Q431 249.5 441.3 245.5" fill="none" stroke="#46a653" stroke-width="1"/>
<path d="M426 302.3 V312.012" stroke="#8f8f8f" stroke-width="2.2"/><circle cx="426" cy="312.012" r="2" fill="#6a6a6a" stroke="#9a9a9a" stroke-width="0.8"/><path d="M435.8 302.3 L439.3 307.8 V311.3" fill="none" stroke="#8f8f8f" stroke-width="2.2" stroke-linejoin="round"/><path d="M421.9 299.3 V284.3 Q421.9 275.3 431 275.3 Q440.1 275.3 440.1 284.3 V295.8 Q441.8 297.3 441.8 299.8 Q441.8 304.3 431.5 304.3 Q421.9 304.3 421.9 299.3 Z" fill="#7f1d20"/><path d="M422.3 299.5 Q431 302.5 441.3 298.5" fill="none" stroke="#a4484a" stroke-width="1"/>
<path d="M478.7 430.2 H484 M478.7 456.4 H484 M512 430.2 H517.5 M512 456.4 H517.5" stroke="#8c8c8c" stroke-width="2"/>
<rect x="482.4" y="428.2" width="31.5" height="30.3" rx="1" fill="#c6c6c6" stroke="#b0b0b0" stroke-width="0.8"/>
<rect x="484.5" y="430.2" width="27.5" height="26.3" fill="#cbcbcb"/>
<g fill="#555"><circle cx="487" cy="432.3" r="2.8"/><circle cx="509.5" cy="432.3" r="2.8"/><circle cx="487" cy="454.6" r="2.8"/><circle cx="509.5" cy="454.6" r="2.8"/></g>
<circle cx="498.1" cy="443.3" r="9" fill="#9a9a9a"/><circle cx="498.6" cy="443.6" r="8.3" fill="#2f2f2f"/>
</svg>
<div id="toolbar">
  <div class="vsep" style="left:86px;top:0;height:44px"></div>
  <div class="vsep" style="left:183px;top:0;height:44px"></div>
  <div class="vsep" style="left:280px;top:0;height:44px"></div>
  <div class="vsep" style="left:1175px;top:0;height:44px"></div>
  <svg width="300" height="44" style="left:0;top:0">
    <!-- rotate -->
    <path d="M5 20.5 Q5.3 14 13 13.9" fill="none" stroke="#34495e" stroke-width="2.1" stroke-linecap="round"/>
    <path d="M12.3 11 L16 14.2 L12.3 17.3 Z" fill="#34495e"/>
    <path d="M3.5 26 L15 19.5 V26 Z" fill="none" stroke="#34495e" stroke-width="2" stroke-linejoin="round"/>
    <path d="M17.6 12.9 L25 26.5 H17.6 Z" fill="#34495e" stroke="#34495e" stroke-width="0.6" stroke-linejoin="round"/>
    <!-- trash -->
    <g fill="none" stroke="#34495e" stroke-width="2">
      <rect x="56.5" y="16" width="11.3" height="11" rx="1"/>
      <path d="M55 15 H69.2"/>
      <rect x="59" y="11.8" width="6.2" height="2.6" rx="1" stroke-width="1.6"/>
      <path d="M60.5 18 V24.7 M63.5 18 V24.7" stroke-width="1.5" stroke-linecap="round"/>
    </g>
    <!-- undo -->
    <path d="M103.5 19.5 L110 14.3 L110 17.5 C116 17.5 120 21 119.6 26.8 C118 23 115 21.5 110 21.5 L110 24.7 Z" fill="#111"/>
    <!-- redo -->
    <path d="M167.3 19.5 L160.8 14.6 L160.8 17.7 C154.8 17.7 150.8 21.2 150.7 27.5 C152.5 23.5 155.5 22 160.8 22 L160.8 25 Z" fill="#111"/>
    <!-- notes -->
    <path d="M200 11 H216 V27.5 H211 L208 30.5 L205 27.5 H200 Z" fill="none" stroke="#34495e" stroke-width="2" stroke-linejoin="round"/>
    <path d="M203.4 14.9 H212.9 M203.4 18.8 H210.7 M203.4 22.8 H212.9" stroke="#34495e" stroke-width="1.7"/>
    <!-- eye -->
    <path d="M247.8 10.8 H264.5 V27.3 H259 L256 30.2 L253 27.3 H247.8 Z" fill="none" stroke="#8a949e" stroke-width="1.7" stroke-linejoin="round"/>
    <path d="M245 19.3 C249 12, 262.5 12, 267.2 19.3 C262.5 26.6, 249 26.6, 245 19.3 Z" fill="#34495e"/>
    <ellipse cx="255.8" cy="19.2" rx="4.5" ry="3.6" fill="#f3f4f6"/>
  </svg>
  <!-- Codigo button -->
  <div class="abs" style="left:905px;top:4px;width:96px;height:32px;background:#0b97d9;border-radius:3px"></div>
  <svg width="30" height="20" style="left:912px;top:10px">
    <path fill-rule="evenodd" d="M3.3 2.3 Q3.3 1.9 3.8 1.9 H24.3 Q24.8 1.9 24.8 2.4 V17.2 Q24.8 17.7 24.3 17.7 H3.8 Q3.3 17.7 3.3 17.2 Z M4.3 6.1 V16.7 H23.8 V6.1 Z" fill="#fff"/>
    <g fill="#0b97d9"><rect x="5" y="3" width="1.9" height="1.9" rx="0.5"/><rect x="8" y="3" width="1.9" height="1.9" rx="0.5"/><rect x="11" y="3" width="1.9" height="1.9" rx="0.5"/></g>
    <path d="M12.6 7.9 L7.6 11.7 L12.6 15.5 M19.2 7.8 L15.7 15.6" fill="none" stroke="#fff" stroke-width="1.8"/>
  </svg>
  <div class="abs" style="left:946.5px;top:10px;font-size:14.3px;color:#fff;line-height:18px;-webkit-text-stroke:0.2px #fff">Código</div>
  <!-- iniciar -->
  <div class="abs" style="left:1007px;top:4px;width:162px;height:32px;border:1px solid #e1e3e6;border-radius:3px"></div>
  <svg width="14" height="16" style="left:1022px;top:12px"><path d="M1 1 L12.5 8 L1 15 Z" fill="#34495e"/></svg>
  <div class="abs" style="left:1049px;top:10px;font-size:14.3px;color:#3b4654;line-height:18px">Iniciar simulación</div>
  <!-- exportar -->
  <div class="abs" style="left:1182px;top:4px;width:80px;height:32px;border:1px solid #e1e3e6;border-radius:3px"></div>
  <div class="abs" style="left:1185.5px;top:10px;font-size:14.3px;color:#3b4654;line-height:18px">Exportación</div>
</div>
<div id="panel">
  <div id="subbar">
    <div class="sel" style="left:6.5px;top:6.5px;width:235.5px;height:32.5px"></div>
    <div class="abs" style="left:18px;top:15px;font-size:15px;color:#333;line-height:18px">Texto</div>
    <svg width="12" height="8" style="left:217px;top:20px"><path d="M0.5 1 H10.5 L5.5 6 Z" fill="#222"/></svg>
    <div class="vsep" style="left:250px;top:0;height:48px"></div>
    <div class="ibtn" style="left:268px;top:8px;width:38px;height:32px"></div>
    <div class="ibtn" style="left:314px;top:8px;width:38px;height:32px"></div>
    <div class="ibtn" style="left:360px;top:8px;width:38px;height:32px"></div>
    <svg width="140" height="48" style="left:267px;top:0">
      <rect x="17" y="17.9" width="4.2" height="5.6" fill="#000"/>
      <path d="M13.7 23 H24.3 L19 30.6 Z" fill="#000"/>
      <rect x="9.9" y="30.9" width="18.3" height="2.1" fill="#000"/>
      <path d="M59.6 16 H70.5 L74.1 21 H56 Z" fill="#34495e"/>
      <path d="M59 18 H71 M57.6 20 H72.6" stroke="#e9ebee" stroke-width="0.8"/>
      <rect x="56" y="20.8" width="18.1" height="10.9" rx="0.8" fill="#34495e"/>
      <rect x="60.7" y="25" width="8.3" height="1.4" fill="#e9ebee"/>
      <ellipse cx="110.9" cy="25.6" rx="5.6" ry="7.2" fill="#34495e"/>
      <circle cx="110.9" cy="19" r="3" fill="#34495e"/>
      <path d="M109 17.5 L106.8 14.6 M112.8 17.5 L115 14.6 M106 22 L102.6 20 M115.8 22 L119.2 20 M105.5 25.5 L102.3 25.8 M116.3 25.5 L119.5 25.8 M106 29 L103.5 31.5 M115.8 29 L118.3 31.5" stroke="#34495e" stroke-width="1.6" stroke-linecap="round"/>
      <path d="M110.9 27 V33" stroke="#e9ebee" stroke-width="0.8"/>
    </svg>
    <div class="vsep" style="left:407px;top:0;height:48px"></div>
    <div class="sel" style="left:415px;top:7px;width:120px;height:33px"></div>
    <div class="abs" style="left:426px;top:15px;font-size:15px;color:#333;line-height:18px">1 (Arduino Uno R3)</div>
  </div>
  <div id="code">
    <div id="gutter"><div id="glines"><div class="gn">1</div>
<div class="gn">2</div>
<div class="gn">3</div>
<div class="gn">4</div>
<div class="gn">5</div>
<div class="gn">6</div>
<div class="gn">7</div>
<div class="gn">8</div>
<div class="gn">9</div>
<div class="gn">10</div>
<div class="gn">11</div>
<div class="gn">12</div>
<div class="gn">13</div>
<div class="gn">14</div>
<div class="gn">15</div>
<div class="gn">16</div>
<div class="gn">17</div>
<div class="gn">18</div></div></div>
    <div id="lines"><div class="ln"><span class="k">void</span> setup()</div><div class="ln">{</div><div class="ln">  pinMode(<span class="n">2</span>, INPUT);</div><div class="ln">  pinMode(<span class="n">12</span>, OUTPUT);</div><div class="ln">  pinMode(<span class="n">13</span>, OUTPUT);</div><div class="ln">}</div><div class="ln">&#8203;</div><div class="ln"><span class="k">void</span> loop()</div><div class="ln">{</div><div class="ln">  <span class="k">if</span> (digitalRead(<span class="n">2</span>)) {</div><div class="ln">    digitalWrite(<span class="n">13</span>, HIGH);</div><div class="ln">    digitalWrite(<span class="n">12</span>, LOW);</div><div class="ln">    delay(<span class="n">1000</span>); <span class="c">// Wait for 1000 millisecond(s)</span></div><div class="ln">    digitalWrite(<span class="n">12</span>, HIGH);</div><div class="ln">    digitalWrite(<span class="n">13</span>, LOW);</div><div class="ln">    delay(<span class="n">1000</span>); <span class="c">// Wait for 1000 millisecond(s)</span></div><div class="ln">  }</div><div class="ln">}</div></div>
  </div>
</div>
</body></html>
